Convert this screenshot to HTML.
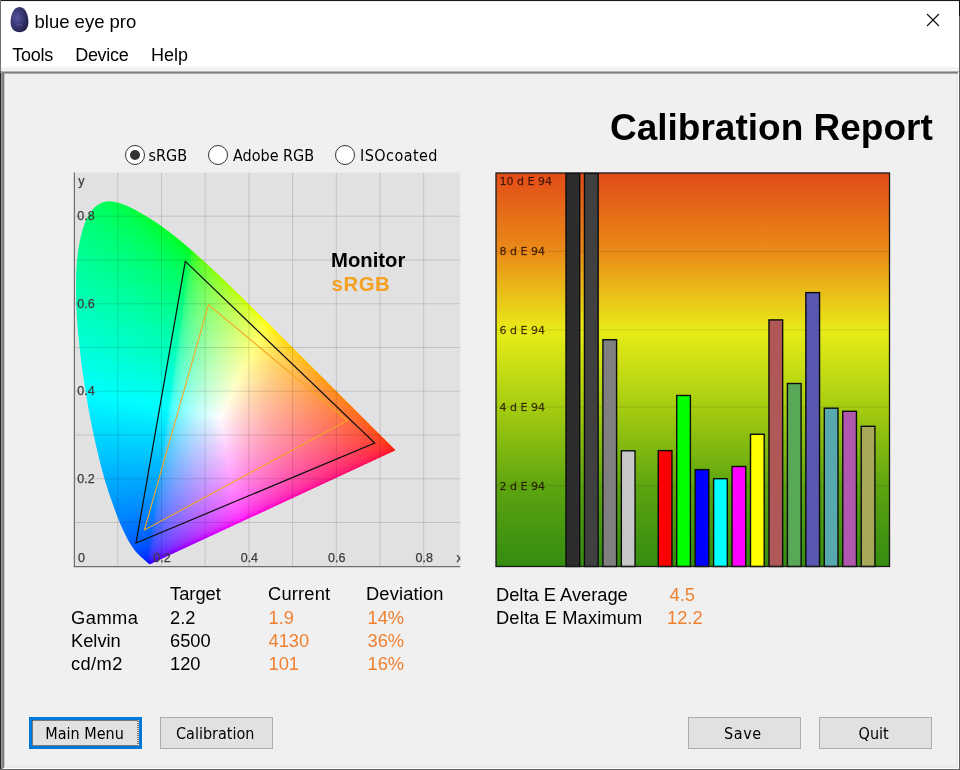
<!DOCTYPE html>
<html lang="en"><head><meta charset="utf-8"><title>blue eye pro</title>
<style>
html,body{margin:0;padding:0}
body{width:960px;height:770px;overflow:hidden;background:#f0f0f0;position:relative;font-family:"Liberation Sans",sans-serif}
.abs{position:absolute}
.btn{position:absolute;box-sizing:border-box;background:#e1e1e1;border:1px solid #adadad;width:112.5px;height:32px;top:717px}
.radio{position:absolute;box-sizing:border-box;width:20px;height:20px;border-radius:50%;border:1.6px solid #333;background:#fff;top:144.7px}
</style></head><body>
<div class="abs" style="left:0;top:0;width:960px;height:67px;background:#fff"></div>
<div class="abs" style="left:0;top:67px;width:960px;height:4px;background:#f2f2f2"></div>
<div class="abs" style="left:0;top:0;width:960px;height:1px;background:#1c1c1c"></div>
<div class="abs" style="left:0;top:1px;width:960px;height:1px;background:#ececec"></div>
<!-- content sunken edge -->
<div class="abs" style="left:1px;top:71px;width:958px;height:1px;background:#b6b6b6"></div>
<div class="abs" style="left:1px;top:72px;width:958px;height:1px;background:#7d7d7d"></div>
<div class="abs" style="left:3px;top:73px;width:955px;height:1px;background:#a9a9a9"></div>
<div class="abs" style="left:1px;top:71px;width:1px;height:698px;background:#9a9a9a"></div>
<div class="abs" style="left:2px;top:72px;width:1px;height:697px;background:#858585"></div>
<div class="abs" style="left:3px;top:72px;width:1px;height:696px;background:#7a7a7a"></div>
<div class="abs" style="left:4px;top:74px;width:1px;height:693px;background:#cbcbcb"></div>
<div class="abs" style="left:956px;top:74px;width:2px;height:692px;background:#e9e9e9"></div>
<div class="abs" style="left:5px;top:766px;width:953px;height:2px;background:#e9e9e9"></div>
<div class="abs" style="left:958px;top:72px;width:1px;height:697px;background:#fff"></div>
<div class="abs" style="left:3px;top:768px;width:956px;height:1px;background:#fff"></div>
<!-- outer frame -->
<div class="abs" style="left:0;top:0;width:1px;height:73px;background:#707070"></div>
<div class="abs" style="left:0;top:73px;width:1px;height:697px;background:#242424"></div>
<div class="abs" style="left:959px;top:0;width:1px;height:16px;background:#111"></div>
<div class="abs" style="left:959px;top:16px;width:1px;height:754px;background:#606060"></div>
<div class="abs" style="left:0;top:769px;width:960px;height:1px;background:#666"></div>
<!-- icon -->
<svg class="abs" style="left:0;top:0" width="60" height="40" viewBox="0 0 60 40">
<defs><radialGradient id="egg" cx="0.36" cy="0.42" r="0.62"><stop offset="0" stop-color="#5855a0"/><stop offset="0.45" stop-color="#3f3c7c"/><stop offset="1" stop-color="#25234c"/></radialGradient></defs>
<path d="M19.5 7 C25.8 7 28.4 15.8 28.4 22.2 C28.4 28.6 24.6 32.2 19.5 32.2 C14.4 32.2 10.6 28.6 10.6 22.2 C10.6 15.8 13.2 7 19.5 7Z" fill="url(#egg)"/>
<rect x="16.8" y="24.3" width="5.2" height="1.3" rx="0.6" fill="#7d7bb5" opacity="0.45"/>
</svg>
<svg class="abs" style="left:920px;top:8px" width="26" height="24" viewBox="920 8 26 24"><path d="M927 14L939 26M939 14L927 26" stroke="#111" stroke-width="1.15" fill="none"/></svg>
<!-- radios -->
<div class="radio" style="left:124.6px"></div><div class="abs" style="left:129.6px;top:149.7px;width:10px;height:10px;border-radius:50%;background:#333"></div>
<div class="radio" style="left:207.7px"></div>
<div class="radio" style="left:335.4px"></div>
<!-- charts -->
<svg class="abs" style="left:0;top:0;filter:blur(0.4px)" width="960" height="770" viewBox="0 0 960 770">

<rect x="74.4" y="172.5" width="385.8" height="393.8" fill="#e1e1e1"/>
<defs><linearGradient id="g0"><stop offset="0" stop-color="#00ff5c"/><stop offset="1" stop-color="#00ff47"/></linearGradient><linearGradient id="g1"><stop offset="0" stop-color="#00ff61"/><stop offset="1" stop-color="#00ff43"/></linearGradient><linearGradient id="g2"><stop offset="0" stop-color="#00ff65"/><stop offset="0.588" stop-color="#00ff52"/><stop offset="1" stop-color="#00ff3f"/></linearGradient><linearGradient id="g3"><stop offset="0" stop-color="#00ff69"/><stop offset="0.6" stop-color="#00ff52"/><stop offset="1" stop-color="#00ff3c"/></linearGradient><linearGradient id="g4"><stop offset="0" stop-color="#00ff6c"/><stop offset="0.591" stop-color="#00ff54"/><stop offset="1" stop-color="#00ff39"/></linearGradient><linearGradient id="g5"><stop offset="0" stop-color="#00ff6e"/><stop offset="0.6" stop-color="#00ff54"/><stop offset="1" stop-color="#00ff36"/></linearGradient><linearGradient id="g6"><stop offset="0" stop-color="#00ff71"/><stop offset="0.63" stop-color="#00ff53"/><stop offset="1" stop-color="#00ff33"/></linearGradient><linearGradient id="g7"><stop offset="0" stop-color="#00ff73"/><stop offset="0.621" stop-color="#00ff54"/><stop offset="0.828" stop-color="#00ff44"/><stop offset="1" stop-color="#00ff30"/></linearGradient><linearGradient id="g8"><stop offset="0" stop-color="#00ff75"/><stop offset="0.625" stop-color="#00ff55"/><stop offset="0.844" stop-color="#00ff42"/><stop offset="1" stop-color="#00ff2d"/></linearGradient><linearGradient id="g9"><stop offset="0" stop-color="#00ff78"/><stop offset="0.636" stop-color="#00ff55"/><stop offset="0.848" stop-color="#00ff41"/><stop offset="1" stop-color="#00ff2b"/></linearGradient><linearGradient id="g10"><stop offset="0" stop-color="#00ff7a"/><stop offset="0.371" stop-color="#00ff67"/><stop offset="0.657" stop-color="#00ff54"/><stop offset="0.857" stop-color="#00ff40"/><stop offset="1" stop-color="#00ff28"/></linearGradient><linearGradient id="g11"><stop offset="0" stop-color="#00ff7c"/><stop offset="0.378" stop-color="#00ff68"/><stop offset="0.676" stop-color="#00ff53"/><stop offset="0.865" stop-color="#00ff3e"/><stop offset="1" stop-color="#00ff25"/></linearGradient><linearGradient id="g12"><stop offset="0" stop-color="#00ff7e"/><stop offset="0.385" stop-color="#00ff69"/><stop offset="0.667" stop-color="#00ff54"/><stop offset="0.872" stop-color="#00ff3d"/><stop offset="1" stop-color="#00ff22"/></linearGradient><linearGradient id="g13"><stop offset="0" stop-color="#00ff80"/><stop offset="0.39" stop-color="#00ff6a"/><stop offset="0.683" stop-color="#00ff54"/><stop offset="0.878" stop-color="#00ff3c"/><stop offset="0.951" stop-color="#00ff2e"/><stop offset="1" stop-color="#00ff1e"/></linearGradient><linearGradient id="g14"><stop offset="0" stop-color="#00ff81"/><stop offset="0.405" stop-color="#00ff6b"/><stop offset="0.69" stop-color="#00ff54"/><stop offset="0.905" stop-color="#00ff37"/><stop offset="0.952" stop-color="#00ff2c"/><stop offset="1" stop-color="#00ff1b"/></linearGradient><linearGradient id="g15"><stop offset="0" stop-color="#00ff83"/><stop offset="0.409" stop-color="#00ff6c"/><stop offset="0.705" stop-color="#00ff53"/><stop offset="0.909" stop-color="#00ff35"/><stop offset="0.955" stop-color="#00ff2a"/><stop offset="1" stop-color="#00ff17"/></linearGradient><linearGradient id="g16"><stop offset="0" stop-color="#00ff85"/><stop offset="0.4" stop-color="#00ff6e"/><stop offset="0.711" stop-color="#00ff53"/><stop offset="0.911" stop-color="#00ff34"/><stop offset="0.978" stop-color="#00ff20"/><stop offset="1" stop-color="#00ff12"/></linearGradient><linearGradient id="g17"><stop offset="0" stop-color="#00ff87"/><stop offset="0.426" stop-color="#00ff6d"/><stop offset="0.745" stop-color="#00ff50"/><stop offset="0.851" stop-color="#00ff40"/><stop offset="0.936" stop-color="#00ff2e"/><stop offset="0.979" stop-color="#00ff1e"/><stop offset="1" stop-color="#00ff0b"/></linearGradient><linearGradient id="g18"><stop offset="0" stop-color="#00ff89"/><stop offset="0.458" stop-color="#00ff6c"/><stop offset="0.771" stop-color="#00ff4d"/><stop offset="0.875" stop-color="#00ff3c"/><stop offset="0.938" stop-color="#00ff2d"/><stop offset="0.979" stop-color="#00ff1b"/><stop offset="1" stop-color="#00ff00"/></linearGradient><linearGradient id="g19"><stop offset="0" stop-color="#00ff8a"/><stop offset="0.44" stop-color="#00ff6f"/><stop offset="0.76" stop-color="#00ff4f"/><stop offset="0.86" stop-color="#00ff3f"/><stop offset="0.94" stop-color="#00ff2b"/><stop offset="0.98" stop-color="#00ff19"/><stop offset="1" stop-color="#00ff00"/></linearGradient><linearGradient id="g20"><stop offset="0" stop-color="#00ff8c"/><stop offset="0.451" stop-color="#00ff6f"/><stop offset="0.765" stop-color="#00ff4f"/><stop offset="0.863" stop-color="#00ff3f"/><stop offset="0.941" stop-color="#00ff2a"/><stop offset="0.98" stop-color="#00ff16"/><stop offset="1" stop-color="#00ff00"/></linearGradient><linearGradient id="g21"><stop offset="0" stop-color="#00ff8e"/><stop offset="0.453" stop-color="#00ff71"/><stop offset="0.755" stop-color="#00ff51"/><stop offset="0.849" stop-color="#00ff42"/><stop offset="0.925" stop-color="#00ff30"/><stop offset="0.962" stop-color="#00ff21"/><stop offset="1" stop-color="#00ff00"/></linearGradient><linearGradient id="g22"><stop offset="0" stop-color="#00ff8f"/><stop offset="0.444" stop-color="#00ff73"/><stop offset="0.759" stop-color="#00ff51"/><stop offset="0.852" stop-color="#00ff42"/><stop offset="0.926" stop-color="#00ff2f"/><stop offset="0.963" stop-color="#00ff1f"/><stop offset="1" stop-color="#00ff00"/></linearGradient><linearGradient id="g23"><stop offset="0" stop-color="#00ff91"/><stop offset="0.436" stop-color="#00ff74"/><stop offset="0.745" stop-color="#00ff54"/><stop offset="0.855" stop-color="#00ff42"/><stop offset="0.927" stop-color="#00ff2e"/><stop offset="0.964" stop-color="#00ff1e"/><stop offset="0.982" stop-color="#00ff09"/><stop offset="1" stop-color="#16ff00"/></linearGradient><linearGradient id="g24"><stop offset="0" stop-color="#00ff92"/><stop offset="0.386" stop-color="#00ff7a"/><stop offset="0.684" stop-color="#00ff5d"/><stop offset="0.877" stop-color="#00ff3d"/><stop offset="0.93" stop-color="#00ff2e"/><stop offset="0.965" stop-color="#00ff1c"/><stop offset="0.982" stop-color="#20ff00"/><stop offset="1" stop-color="#34ff00"/></linearGradient><linearGradient id="g25"><stop offset="0" stop-color="#00ff94"/><stop offset="0.379" stop-color="#00ff7c"/><stop offset="0.655" stop-color="#00ff62"/><stop offset="0.845" stop-color="#00ff45"/><stop offset="0.914" stop-color="#00ff33"/><stop offset="0.948" stop-color="#00ff26"/><stop offset="0.966" stop-color="#26ff1b"/><stop offset="0.983" stop-color="#37ff00"/><stop offset="1" stop-color="#43ff00"/></linearGradient><linearGradient id="g26"><stop offset="0" stop-color="#00ff95"/><stop offset="0.356" stop-color="#00ff7f"/><stop offset="0.627" stop-color="#00ff66"/><stop offset="0.814" stop-color="#00ff4b"/><stop offset="0.932" stop-color="#00ff2d"/><stop offset="0.949" stop-color="#2bff25"/><stop offset="0.966" stop-color="#3bff1a"/><stop offset="0.983" stop-color="#46ff00"/><stop offset="1" stop-color="#4fff00"/></linearGradient><linearGradient id="g27"><stop offset="0" stop-color="#00ff97"/><stop offset="0.333" stop-color="#00ff82"/><stop offset="0.583" stop-color="#00ff6c"/><stop offset="0.767" stop-color="#00ff54"/><stop offset="0.9" stop-color="#00ff38"/><stop offset="0.917" stop-color="#12ff33"/><stop offset="0.933" stop-color="#2fff2c"/><stop offset="0.967" stop-color="#48ff18"/><stop offset="0.983" stop-color="#51ff00"/><stop offset="1" stop-color="#59ff00"/></linearGradient><linearGradient id="g28"><stop offset="0" stop-color="#00ff98"/><stop offset="0.306" stop-color="#00ff85"/><stop offset="0.565" stop-color="#00ff6f"/><stop offset="0.758" stop-color="#00ff56"/><stop offset="0.887" stop-color="#00ff3c"/><stop offset="0.903" stop-color="#1fff37"/><stop offset="0.919" stop-color="#34ff32"/><stop offset="0.952" stop-color="#4bff23"/><stop offset="0.968" stop-color="#53ff16"/><stop offset="0.984" stop-color="#5bff00"/><stop offset="1" stop-color="#62ff00"/></linearGradient><linearGradient id="g29"><stop offset="0" stop-color="#00ff9a"/><stop offset="0.302" stop-color="#00ff87"/><stop offset="0.556" stop-color="#00ff71"/><stop offset="0.746" stop-color="#00ff59"/><stop offset="0.873" stop-color="#00ff40"/><stop offset="0.889" stop-color="#24ff3c"/><stop offset="0.905" stop-color="#37ff37"/><stop offset="0.952" stop-color="#55ff23"/><stop offset="0.968" stop-color="#5dff15"/><stop offset="0.984" stop-color="#63ff00"/><stop offset="1" stop-color="#6aff00"/></linearGradient><linearGradient id="g30"><stop offset="0" stop-color="#00ff9b"/><stop offset="0.531" stop-color="#00ff75"/><stop offset="0.719" stop-color="#00ff5e"/><stop offset="0.859" stop-color="#00ff44"/><stop offset="0.875" stop-color="#29ff40"/><stop offset="0.891" stop-color="#3aff3c"/><stop offset="0.953" stop-color="#5eff22"/><stop offset="0.984" stop-color="#6bff00"/><stop offset="1" stop-color="#71ff00"/></linearGradient><linearGradient id="g31"><stop offset="0" stop-color="#00ff9d"/><stop offset="0.523" stop-color="#00ff77"/><stop offset="0.708" stop-color="#00ff61"/><stop offset="0.846" stop-color="#00ff48"/><stop offset="0.862" stop-color="#2dff44"/><stop offset="0.877" stop-color="#3cff41"/><stop offset="0.938" stop-color="#60ff2b"/><stop offset="0.954" stop-color="#66ff22"/><stop offset="0.985" stop-color="#72ff00"/><stop offset="1" stop-color="#77ff00"/></linearGradient><linearGradient id="g32"><stop offset="0" stop-color="#00ff9e"/><stop offset="0.5" stop-color="#00ff7a"/><stop offset="0.682" stop-color="#00ff65"/><stop offset="0.818" stop-color="#00ff4f"/><stop offset="0.833" stop-color="#14ff4c"/><stop offset="0.848" stop-color="#30ff48"/><stop offset="0.879" stop-color="#49ff41"/><stop offset="0.939" stop-color="#68ff2a"/><stop offset="0.955" stop-color="#6eff21"/><stop offset="0.985" stop-color="#79ff00"/><stop offset="1" stop-color="#7eff00"/></linearGradient><linearGradient id="g33"><stop offset="0" stop-color="#00ffa0"/><stop offset="0.493" stop-color="#00ff7c"/><stop offset="0.672" stop-color="#00ff68"/><stop offset="0.806" stop-color="#00ff52"/><stop offset="0.836" stop-color="#33ff4c"/><stop offset="0.866" stop-color="#4bff45"/><stop offset="0.94" stop-color="#6fff2a"/><stop offset="0.955" stop-color="#75ff21"/><stop offset="0.985" stop-color="#7fff00"/><stop offset="1" stop-color="#84ff00"/></linearGradient><linearGradient id="g34"><stop offset="0" stop-color="#00ffa1"/><stop offset="0.485" stop-color="#00ff7e"/><stop offset="0.662" stop-color="#00ff6a"/><stop offset="0.794" stop-color="#00ff55"/><stop offset="0.809" stop-color="#21ff53"/><stop offset="0.824" stop-color="#35ff4f"/><stop offset="0.853" stop-color="#4dff49"/><stop offset="0.941" stop-color="#76ff2a"/><stop offset="0.956" stop-color="#7bff21"/><stop offset="0.985" stop-color="#85ff00"/><stop offset="1" stop-color="#8aff00"/></linearGradient><linearGradient id="g35"><stop offset="0" stop-color="#00ffa3"/><stop offset="0.471" stop-color="#00ff81"/><stop offset="0.643" stop-color="#00ff6e"/><stop offset="0.786" stop-color="#00ff58"/><stop offset="0.8" stop-color="#2aff55"/><stop offset="0.814" stop-color="#3bff52"/><stop offset="0.843" stop-color="#50ff4c"/><stop offset="0.929" stop-color="#78ff31"/><stop offset="0.957" stop-color="#82ff20"/><stop offset="0.971" stop-color="#86ff0b"/><stop offset="0.986" stop-color="#8bff00"/><stop offset="1" stop-color="#8fff00"/></linearGradient><linearGradient id="g36"><stop offset="0" stop-color="#00ffa4"/><stop offset="0.465" stop-color="#00ff83"/><stop offset="0.634" stop-color="#00ff70"/><stop offset="0.775" stop-color="#00ff5b"/><stop offset="0.789" stop-color="#2dff58"/><stop offset="0.803" stop-color="#3dff55"/><stop offset="0.831" stop-color="#52ff4f"/><stop offset="0.873" stop-color="#68ff45"/><stop offset="0.93" stop-color="#7eff31"/><stop offset="0.958" stop-color="#87ff1f"/><stop offset="0.972" stop-color="#8cff09"/><stop offset="0.986" stop-color="#90ff00"/><stop offset="1" stop-color="#94ff00"/></linearGradient><linearGradient id="g37"><stop offset="0" stop-color="#00ffa6"/><stop offset="0.444" stop-color="#00ff86"/><stop offset="0.75" stop-color="#00ff60"/><stop offset="0.764" stop-color="#14ff5e"/><stop offset="0.778" stop-color="#30ff5b"/><stop offset="0.792" stop-color="#3fff59"/><stop offset="0.819" stop-color="#53ff53"/><stop offset="0.861" stop-color="#69ff49"/><stop offset="0.931" stop-color="#84ff31"/><stop offset="0.958" stop-color="#8dff1f"/><stop offset="0.972" stop-color="#91ff06"/><stop offset="1" stop-color="#9aff00"/></linearGradient><linearGradient id="g38"><stop offset="0" stop-color="#00ffa7"/><stop offset="0.438" stop-color="#00ff88"/><stop offset="0.74" stop-color="#00ff63"/><stop offset="0.767" stop-color="#33ff5e"/><stop offset="0.808" stop-color="#55ff56"/><stop offset="0.849" stop-color="#6aff4d"/><stop offset="0.918" stop-color="#85ff37"/><stop offset="0.959" stop-color="#93ff1f"/><stop offset="0.973" stop-color="#97ff00"/><stop offset="1" stop-color="#9fff00"/></linearGradient><linearGradient id="g39"><stop offset="0" stop-color="#00ffa9"/><stop offset="0.432" stop-color="#00ff89"/><stop offset="0.73" stop-color="#00ff66"/><stop offset="0.743" stop-color="#21ff63"/><stop offset="0.757" stop-color="#36ff61"/><stop offset="0.797" stop-color="#56ff59"/><stop offset="0.851" stop-color="#72ff4d"/><stop offset="0.919" stop-color="#8bff37"/><stop offset="0.959" stop-color="#98ff1f"/><stop offset="0.973" stop-color="#9cff00"/><stop offset="1" stop-color="#a4ff00"/></linearGradient><linearGradient id="g40"><stop offset="0" stop-color="#00ffaa"/><stop offset="0.427" stop-color="#00ff8b"/><stop offset="0.72" stop-color="#00ff68"/><stop offset="0.733" stop-color="#25ff66"/><stop offset="0.747" stop-color="#38ff64"/><stop offset="0.787" stop-color="#58ff5c"/><stop offset="0.84" stop-color="#73ff51"/><stop offset="0.92" stop-color="#90ff37"/><stop offset="0.96" stop-color="#9dff1f"/><stop offset="0.973" stop-color="#a1ff00"/><stop offset="1" stop-color="#a8ff00"/></linearGradient><linearGradient id="g41"><stop offset="0" stop-color="#00ffab"/><stop offset="0.408" stop-color="#00ff8e"/><stop offset="0.711" stop-color="#00ff6b"/><stop offset="0.724" stop-color="#29ff69"/><stop offset="0.75" stop-color="#47ff64"/><stop offset="0.776" stop-color="#59ff5f"/><stop offset="0.842" stop-color="#7aff51"/><stop offset="0.921" stop-color="#96ff38"/><stop offset="0.961" stop-color="#a2ff1f"/><stop offset="0.974" stop-color="#a6ff00"/><stop offset="1" stop-color="#adff00"/></linearGradient><linearGradient id="g42"><stop offset="0" stop-color="#00ffad"/><stop offset="0.403" stop-color="#00ff90"/><stop offset="0.701" stop-color="#00ff6d"/><stop offset="0.714" stop-color="#2cff6b"/><stop offset="0.74" stop-color="#49ff67"/><stop offset="0.766" stop-color="#5bff62"/><stop offset="0.831" stop-color="#7bff55"/><stop offset="0.922" stop-color="#9bff38"/><stop offset="0.961" stop-color="#a7ff1f"/><stop offset="0.974" stop-color="#abff00"/><stop offset="1" stop-color="#b2ff00"/></linearGradient><linearGradient id="g43"><stop offset="0" stop-color="#00ffae"/><stop offset="0.397" stop-color="#00ff92"/><stop offset="0.679" stop-color="#00ff72"/><stop offset="0.692" stop-color="#08ff70"/><stop offset="0.705" stop-color="#2fff6e"/><stop offset="0.718" stop-color="#3fff6c"/><stop offset="0.769" stop-color="#64ff63"/><stop offset="0.833" stop-color="#81ff55"/><stop offset="0.91" stop-color="#9cff3d"/><stop offset="0.936" stop-color="#a4ff32"/><stop offset="0.962" stop-color="#acff1f"/><stop offset="0.974" stop-color="#afff00"/><stop offset="1" stop-color="#b6ff00"/></linearGradient><linearGradient id="g44"><stop offset="0" stop-color="#00ffb0"/><stop offset="0.38" stop-color="#00ff95"/><stop offset="0.671" stop-color="#00ff74"/><stop offset="0.684" stop-color="#16ff72"/><stop offset="0.696" stop-color="#32ff70"/><stop offset="0.709" stop-color="#41ff6e"/><stop offset="0.759" stop-color="#65ff66"/><stop offset="0.823" stop-color="#82ff58"/><stop offset="0.911" stop-color="#a1ff3e"/><stop offset="0.937" stop-color="#a9ff32"/><stop offset="0.962" stop-color="#b0ff1f"/><stop offset="0.975" stop-color="#b4ff00"/><stop offset="1" stop-color="#bbff00"/></linearGradient><linearGradient id="g45"><stop offset="0" stop-color="#00ffb1"/><stop offset="0.375" stop-color="#00ff97"/><stop offset="0.662" stop-color="#00ff76"/><stop offset="0.687" stop-color="#35ff73"/><stop offset="0.712" stop-color="#4eff6f"/><stop offset="0.75" stop-color="#66ff68"/><stop offset="0.825" stop-color="#88ff59"/><stop offset="0.912" stop-color="#a6ff3e"/><stop offset="0.937" stop-color="#aeff32"/><stop offset="0.963" stop-color="#b5ff1f"/><stop offset="0.975" stop-color="#b9ff00"/><stop offset="1" stop-color="#bfff00"/></linearGradient><linearGradient id="g46"><stop offset="0" stop-color="#00ffb3"/><stop offset="0.37" stop-color="#00ff98"/><stop offset="0.654" stop-color="#00ff79"/><stop offset="0.667" stop-color="#22ff77"/><stop offset="0.679" stop-color="#37ff75"/><stop offset="0.704" stop-color="#4fff71"/><stop offset="0.741" stop-color="#68ff6b"/><stop offset="0.815" stop-color="#89ff5c"/><stop offset="0.914" stop-color="#abff3e"/><stop offset="0.938" stop-color="#b3ff32"/><stop offset="0.963" stop-color="#baff1f"/><stop offset="0.975" stop-color="#bdff00"/><stop offset="1" stop-color="#c4ff00"/></linearGradient><linearGradient id="g47"><stop offset="0" stop-color="#00ffb4"/><stop offset="0.366" stop-color="#00ff9a"/><stop offset="0.646" stop-color="#00ff7b"/><stop offset="0.659" stop-color="#26ff79"/><stop offset="0.671" stop-color="#3aff78"/><stop offset="0.695" stop-color="#51ff74"/><stop offset="0.732" stop-color="#69ff6e"/><stop offset="0.805" stop-color="#8bff5f"/><stop offset="0.915" stop-color="#b0ff3f"/><stop offset="0.939" stop-color="#b7ff32"/><stop offset="0.963" stop-color="#beff1f"/><stop offset="0.976" stop-color="#c2ff00"/><stop offset="1" stop-color="#c8ff00"/></linearGradient><linearGradient id="g48"><stop offset="0" stop-color="#00ffb5"/><stop offset="0.361" stop-color="#00ff9c"/><stop offset="0.639" stop-color="#00ff7d"/><stop offset="0.651" stop-color="#2aff7c"/><stop offset="0.663" stop-color="#3cff7a"/><stop offset="0.687" stop-color="#53ff76"/><stop offset="0.723" stop-color="#6aff70"/><stop offset="0.795" stop-color="#8cff63"/><stop offset="0.904" stop-color="#b1ff44"/><stop offset="0.952" stop-color="#bfff2a"/><stop offset="0.964" stop-color="#c3ff1f"/><stop offset="0.976" stop-color="#c6ff00"/><stop offset="1" stop-color="#cdff00"/></linearGradient><linearGradient id="g49"><stop offset="0" stop-color="#00ffb7"/><stop offset="0.357" stop-color="#00ff9e"/><stop offset="0.631" stop-color="#00ff80"/><stop offset="0.643" stop-color="#2dff7e"/><stop offset="0.655" stop-color="#3eff7c"/><stop offset="0.679" stop-color="#54ff79"/><stop offset="0.714" stop-color="#6bff73"/><stop offset="0.798" stop-color="#92ff63"/><stop offset="0.905" stop-color="#b6ff44"/><stop offset="0.952" stop-color="#c4ff2b"/><stop offset="0.964" stop-color="#c7ff1f"/><stop offset="0.976" stop-color="#cbff00"/><stop offset="1" stop-color="#d1ff00"/></linearGradient><linearGradient id="g50"><stop offset="0" stop-color="#00ffb8"/><stop offset="0.341" stop-color="#00ffa0"/><stop offset="0.612" stop-color="#00ff84"/><stop offset="0.624" stop-color="#0aff82"/><stop offset="0.635" stop-color="#30ff80"/><stop offset="0.647" stop-color="#40ff7f"/><stop offset="0.671" stop-color="#56ff7b"/><stop offset="0.706" stop-color="#6dff76"/><stop offset="0.788" stop-color="#93ff66"/><stop offset="0.906" stop-color="#bbff45"/><stop offset="0.953" stop-color="#c9ff2b"/><stop offset="0.965" stop-color="#ccff1f"/><stop offset="0.976" stop-color="#cfff00"/><stop offset="1" stop-color="#d5ff00"/></linearGradient><linearGradient id="g51"><stop offset="0" stop-color="#00ffba"/><stop offset="0.337" stop-color="#00ffa2"/><stop offset="0.605" stop-color="#00ff86"/><stop offset="0.628" stop-color="#33ff83"/><stop offset="0.64" stop-color="#42ff81"/><stop offset="0.663" stop-color="#57ff7e"/><stop offset="0.698" stop-color="#6eff78"/><stop offset="0.779" stop-color="#94ff69"/><stop offset="0.849" stop-color="#adff58"/><stop offset="0.907" stop-color="#bfff45"/><stop offset="0.953" stop-color="#cdff2b"/><stop offset="0.965" stop-color="#d0ff1f"/><stop offset="0.977" stop-color="#d4ff00"/><stop offset="1" stop-color="#daff00"/></linearGradient><linearGradient id="g52"><stop offset="0" stop-color="#00ffbb"/><stop offset="0.333" stop-color="#00ffa4"/><stop offset="0.598" stop-color="#00ff88"/><stop offset="0.621" stop-color="#36ff85"/><stop offset="0.632" stop-color="#44ff83"/><stop offset="0.655" stop-color="#59ff80"/><stop offset="0.69" stop-color="#6fff7b"/><stop offset="0.77" stop-color="#95ff6c"/><stop offset="0.897" stop-color="#c1ff4a"/><stop offset="0.954" stop-color="#d1ff2b"/><stop offset="0.966" stop-color="#d5ff20"/><stop offset="0.977" stop-color="#d8ff00"/><stop offset="1" stop-color="#deff00"/></linearGradient><linearGradient id="g53"><stop offset="0" stop-color="#00ffbd"/><stop offset="0.33" stop-color="#00ffa5"/><stop offset="0.591" stop-color="#00ff8a"/><stop offset="0.602" stop-color="#23ff89"/><stop offset="0.614" stop-color="#39ff87"/><stop offset="0.636" stop-color="#51ff84"/><stop offset="0.682" stop-color="#71ff7d"/><stop offset="0.773" stop-color="#9bff6d"/><stop offset="0.898" stop-color="#c5ff4a"/><stop offset="0.955" stop-color="#d6ff2c"/><stop offset="0.966" stop-color="#d9ff20"/><stop offset="0.977" stop-color="#dcff00"/><stop offset="1" stop-color="#e3ff00"/></linearGradient><linearGradient id="g54"><stop offset="0" stop-color="#00ffbe"/><stop offset="0.326" stop-color="#00ffa7"/><stop offset="0.584" stop-color="#00ff8c"/><stop offset="0.596" stop-color="#28ff8b"/><stop offset="0.607" stop-color="#3bff89"/><stop offset="0.629" stop-color="#53ff86"/><stop offset="0.674" stop-color="#72ff7f"/><stop offset="0.764" stop-color="#9cff70"/><stop offset="0.899" stop-color="#caff4b"/><stop offset="0.955" stop-color="#daff2c"/><stop offset="0.966" stop-color="#deff20"/><stop offset="0.978" stop-color="#e1ff00"/><stop offset="1" stop-color="#e7ff00"/></linearGradient><linearGradient id="g55"><stop offset="0" stop-color="#00ffc0"/><stop offset="0.322" stop-color="#00ffa9"/><stop offset="0.578" stop-color="#00ff8e"/><stop offset="0.589" stop-color="#2cff8d"/><stop offset="0.6" stop-color="#3eff8b"/><stop offset="0.622" stop-color="#55ff88"/><stop offset="0.667" stop-color="#73ff82"/><stop offset="0.767" stop-color="#a1ff70"/><stop offset="0.9" stop-color="#cfff4b"/><stop offset="0.956" stop-color="#dfff2c"/><stop offset="0.967" stop-color="#e2ff20"/><stop offset="0.978" stop-color="#e5ff00"/><stop offset="1" stop-color="#ebff00"/></linearGradient><linearGradient id="g56"><stop offset="0" stop-color="#00ffc1"/><stop offset="0.319" stop-color="#00ffab"/><stop offset="0.571" stop-color="#00ff91"/><stop offset="0.582" stop-color="#2fff8f"/><stop offset="0.593" stop-color="#40ff8e"/><stop offset="0.615" stop-color="#57ff8b"/><stop offset="0.659" stop-color="#75ff84"/><stop offset="0.758" stop-color="#a3ff73"/><stop offset="0.835" stop-color="#beff61"/><stop offset="0.901" stop-color="#d3ff4c"/><stop offset="0.956" stop-color="#e3ff2d"/><stop offset="0.967" stop-color="#e6ff21"/><stop offset="0.978" stop-color="#e9ff00"/><stop offset="1" stop-color="#f0ff00"/></linearGradient><linearGradient id="g57"><stop offset="0" stop-color="#00ffc2"/><stop offset="0.304" stop-color="#00ffad"/><stop offset="0.554" stop-color="#00ff94"/><stop offset="0.565" stop-color="#12ff93"/><stop offset="0.576" stop-color="#33ff91"/><stop offset="0.587" stop-color="#42ff90"/><stop offset="0.62" stop-color="#61ff8b"/><stop offset="0.663" stop-color="#7cff85"/><stop offset="0.728" stop-color="#9bff7a"/><stop offset="0.804" stop-color="#b8ff6a"/><stop offset="0.902" stop-color="#d8ff4c"/><stop offset="0.957" stop-color="#e8ff2d"/><stop offset="0.967" stop-color="#ebff21"/><stop offset="0.978" stop-color="#eeff00"/><stop offset="1" stop-color="#f4ff00"/></linearGradient><linearGradient id="g58"><stop offset="0" stop-color="#00ffc4"/><stop offset="0.301" stop-color="#00ffaf"/><stop offset="0.548" stop-color="#00ff96"/><stop offset="0.57" stop-color="#36ff93"/><stop offset="0.581" stop-color="#45ff92"/><stop offset="0.613" stop-color="#62ff8e"/><stop offset="0.656" stop-color="#7eff87"/><stop offset="0.753" stop-color="#a9ff76"/><stop offset="0.892" stop-color="#d9ff51"/><stop offset="0.935" stop-color="#e6ff3d"/><stop offset="0.957" stop-color="#ecff2d"/><stop offset="0.968" stop-color="#efff21"/><stop offset="0.978" stop-color="#f2ff00"/><stop offset="1" stop-color="#f8ff00"/></linearGradient><linearGradient id="g59"><stop offset="0" stop-color="#00ffc5"/><stop offset="0.298" stop-color="#00ffb1"/><stop offset="0.543" stop-color="#00ff98"/><stop offset="0.553" stop-color="#22ff97"/><stop offset="0.564" stop-color="#39ff96"/><stop offset="0.574" stop-color="#47ff94"/><stop offset="0.606" stop-color="#64ff90"/><stop offset="0.649" stop-color="#7fff8a"/><stop offset="0.755" stop-color="#afff77"/><stop offset="0.83" stop-color="#c9ff66"/><stop offset="0.894" stop-color="#deff51"/><stop offset="0.936" stop-color="#eaff3d"/><stop offset="0.957" stop-color="#f1ff2e"/><stop offset="0.968" stop-color="#f4ff22"/><stop offset="0.979" stop-color="#f7ff00"/><stop offset="1" stop-color="#fdff00"/></linearGradient><linearGradient id="g60"><stop offset="0" stop-color="#00ffc7"/><stop offset="0.295" stop-color="#00ffb2"/><stop offset="0.537" stop-color="#00ff9a"/><stop offset="0.547" stop-color="#27ff99"/><stop offset="0.558" stop-color="#3cff98"/><stop offset="0.568" stop-color="#49ff96"/><stop offset="0.6" stop-color="#66ff92"/><stop offset="0.642" stop-color="#80ff8c"/><stop offset="0.747" stop-color="#b0ff7a"/><stop offset="0.832" stop-color="#ceff66"/><stop offset="0.895" stop-color="#e2ff52"/><stop offset="0.937" stop-color="#efff3e"/><stop offset="0.958" stop-color="#f5ff2e"/><stop offset="0.968" stop-color="#f8ff22"/><stop offset="0.979" stop-color="#fbff00"/><stop offset="1" stop-color="#fffd00"/></linearGradient><linearGradient id="g61"><stop offset="0" stop-color="#00ffc8"/><stop offset="0.292" stop-color="#00ffb4"/><stop offset="0.531" stop-color="#00ff9c"/><stop offset="0.542" stop-color="#2bff9b"/><stop offset="0.562" stop-color="#4bff98"/><stop offset="0.594" stop-color="#67ff94"/><stop offset="0.635" stop-color="#82ff8e"/><stop offset="0.708" stop-color="#a5ff83"/><stop offset="0.792" stop-color="#c5ff72"/><stop offset="0.896" stop-color="#e7ff52"/><stop offset="0.938" stop-color="#f3ff3e"/><stop offset="0.958" stop-color="#faff2e"/><stop offset="0.969" stop-color="#fdff22"/><stop offset="0.979" stop-color="#fffe00"/><stop offset="1" stop-color="#fff800"/></linearGradient><linearGradient id="g62"><stop offset="0" stop-color="#00ffca"/><stop offset="0.289" stop-color="#00ffb6"/><stop offset="0.526" stop-color="#00ff9e"/><stop offset="0.536" stop-color="#30ff9d"/><stop offset="0.557" stop-color="#4eff9b"/><stop offset="0.588" stop-color="#69ff97"/><stop offset="0.639" stop-color="#89ff8f"/><stop offset="0.711" stop-color="#aaff83"/><stop offset="0.794" stop-color="#c9ff72"/><stop offset="0.897" stop-color="#ebff53"/><stop offset="0.938" stop-color="#f8ff3f"/><stop offset="0.959" stop-color="#feff2f"/><stop offset="0.969" stop-color="#fffd22"/><stop offset="0.979" stop-color="#fffa00"/><stop offset="1" stop-color="#fff400"/></linearGradient><linearGradient id="g63"><stop offset="0" stop-color="#00ffcb"/><stop offset="0.286" stop-color="#00ffb8"/><stop offset="0.51" stop-color="#00ffa2"/><stop offset="0.52" stop-color="#11ffa0"/><stop offset="0.531" stop-color="#33ff9f"/><stop offset="0.551" stop-color="#50ff9d"/><stop offset="0.592" stop-color="#72ff97"/><stop offset="0.643" stop-color="#8fff90"/><stop offset="0.796" stop-color="#ceff73"/><stop offset="0.898" stop-color="#f0ff54"/><stop offset="0.939" stop-color="#fdff3f"/><stop offset="0.959" stop-color="#fffb2f"/><stop offset="0.969" stop-color="#fff822"/><stop offset="0.98" stop-color="#fff600"/><stop offset="1" stop-color="#fff000"/></linearGradient><linearGradient id="g64"><stop offset="0" stop-color="#00ffcd"/><stop offset="0.273" stop-color="#00ffba"/><stop offset="0.505" stop-color="#00ffa4"/><stop offset="0.525" stop-color="#37ffa1"/><stop offset="0.545" stop-color="#52ff9f"/><stop offset="0.586" stop-color="#73ff9a"/><stop offset="0.636" stop-color="#91ff92"/><stop offset="0.788" stop-color="#d0ff76"/><stop offset="0.899" stop-color="#f5ff54"/><stop offset="0.929" stop-color="#feff46"/><stop offset="0.96" stop-color="#fff72e"/><stop offset="0.97" stop-color="#fff422"/><stop offset="0.98" stop-color="#fff100"/><stop offset="1" stop-color="#ffec00"/></linearGradient><linearGradient id="g65"><stop offset="0" stop-color="#00ffce"/><stop offset="0.283" stop-color="#00ffbb"/><stop offset="0.505" stop-color="#00ffa5"/><stop offset="0.515" stop-color="#31ffa4"/><stop offset="0.535" stop-color="#4fffa2"/><stop offset="0.576" stop-color="#72ff9c"/><stop offset="0.626" stop-color="#90ff95"/><stop offset="0.778" stop-color="#d0ff7a"/><stop offset="0.889" stop-color="#f6ff59"/><stop offset="0.919" stop-color="#ffff4c"/><stop offset="0.949" stop-color="#fff637"/><stop offset="0.97" stop-color="#fff022"/><stop offset="0.98" stop-color="#ffed04"/><stop offset="1" stop-color="#ffe800"/></linearGradient><linearGradient id="g66"><stop offset="0" stop-color="#00ffd0"/><stop offset="0.27" stop-color="#00ffbd"/><stop offset="0.49" stop-color="#00ffa8"/><stop offset="0.5" stop-color="#13ffa7"/><stop offset="0.51" stop-color="#34ffa6"/><stop offset="0.53" stop-color="#51ffa4"/><stop offset="0.57" stop-color="#73ff9f"/><stop offset="0.63" stop-color="#97ff96"/><stop offset="0.78" stop-color="#d5ff7b"/><stop offset="0.89" stop-color="#fbff5a"/><stop offset="0.95" stop-color="#fff137"/><stop offset="0.97" stop-color="#ffec22"/><stop offset="0.98" stop-color="#ffe907"/><stop offset="0.99" stop-color="#ffe700"/><stop offset="1" stop-color="#ffe400"/></linearGradient><linearGradient id="g67"><stop offset="0" stop-color="#00ffd1"/><stop offset="0.267" stop-color="#00ffbf"/><stop offset="0.485" stop-color="#00ffaa"/><stop offset="0.505" stop-color="#38ffa8"/><stop offset="0.525" stop-color="#53ffa6"/><stop offset="0.564" stop-color="#75ffa1"/><stop offset="0.634" stop-color="#9dff97"/><stop offset="0.782" stop-color="#daff7b"/><stop offset="0.891" stop-color="#ffff5a"/><stop offset="0.95" stop-color="#ffed36"/><stop offset="0.97" stop-color="#ffe822"/><stop offset="0.98" stop-color="#ffe608"/><stop offset="0.99" stop-color="#ffe300"/><stop offset="1" stop-color="#ffe100"/></linearGradient><linearGradient id="g68"><stop offset="0" stop-color="#00ffd3"/><stop offset="0.265" stop-color="#00ffc1"/><stop offset="0.48" stop-color="#00ffac"/><stop offset="0.49" stop-color="#24ffab"/><stop offset="0.5" stop-color="#3bffaa"/><stop offset="0.52" stop-color="#55ffa8"/><stop offset="0.559" stop-color="#77ffa3"/><stop offset="0.627" stop-color="#9fff99"/><stop offset="0.765" stop-color="#d8ff81"/><stop offset="0.873" stop-color="#feff63"/><stop offset="0.951" stop-color="#ffe936"/><stop offset="0.971" stop-color="#ffe422"/><stop offset="0.98" stop-color="#ffe20a"/><stop offset="0.99" stop-color="#ffdf00"/><stop offset="1" stop-color="#ffdd00"/></linearGradient><linearGradient id="g69"><stop offset="0" stop-color="#00ffd4"/><stop offset="0.262" stop-color="#00ffc3"/><stop offset="0.476" stop-color="#00ffaf"/><stop offset="0.485" stop-color="#2affad"/><stop offset="0.495" stop-color="#3effac"/><stop offset="0.515" stop-color="#58ffaa"/><stop offset="0.563" stop-color="#7fffa4"/><stop offset="0.631" stop-color="#a5ff9a"/><stop offset="0.767" stop-color="#ddff81"/><stop offset="0.864" stop-color="#ffff67"/><stop offset="0.951" stop-color="#ffe535"/><stop offset="0.971" stop-color="#ffe022"/><stop offset="0.981" stop-color="#ffde0b"/><stop offset="0.99" stop-color="#ffdc00"/><stop offset="1" stop-color="#ffd900"/></linearGradient><linearGradient id="g70"><stop offset="0" stop-color="#00ffd6"/><stop offset="0.26" stop-color="#00ffc4"/><stop offset="0.471" stop-color="#00ffb1"/><stop offset="0.481" stop-color="#2effb0"/><stop offset="0.49" stop-color="#41ffae"/><stop offset="0.51" stop-color="#5affac"/><stop offset="0.558" stop-color="#80ffa6"/><stop offset="0.635" stop-color="#abff9b"/><stop offset="0.76" stop-color="#dfff84"/><stop offset="0.856" stop-color="#fffd6a"/><stop offset="0.942" stop-color="#ffe43c"/><stop offset="0.971" stop-color="#ffdd22"/><stop offset="0.981" stop-color="#ffda0b"/><stop offset="0.99" stop-color="#ffd800"/><stop offset="1" stop-color="#ffd600"/></linearGradient><linearGradient id="g71"><stop offset="0" stop-color="#00ffd7"/><stop offset="0.467" stop-color="#00ffb3"/><stop offset="0.476" stop-color="#33ffb2"/><stop offset="0.486" stop-color="#44ffb1"/><stop offset="0.505" stop-color="#5cffae"/><stop offset="0.552" stop-color="#82ffa8"/><stop offset="0.629" stop-color="#acff9e"/><stop offset="0.743" stop-color="#ddff89"/><stop offset="0.838" stop-color="#ffff72"/><stop offset="0.943" stop-color="#ffe03b"/><stop offset="0.971" stop-color="#ffd922"/><stop offset="0.981" stop-color="#ffd70c"/><stop offset="0.99" stop-color="#ffd500"/><stop offset="1" stop-color="#ffd300"/></linearGradient><linearGradient id="g72"><stop offset="0" stop-color="#00ffd9"/><stop offset="0.453" stop-color="#00ffb6"/><stop offset="0.462" stop-color="#18ffb5"/><stop offset="0.472" stop-color="#37ffb4"/><stop offset="0.481" stop-color="#47ffb3"/><stop offset="0.5" stop-color="#5effb0"/><stop offset="0.557" stop-color="#8affa9"/><stop offset="0.642" stop-color="#b7ff9d"/><stop offset="0.755" stop-color="#e5ff88"/><stop offset="0.83" stop-color="#fffd74"/><stop offset="0.943" stop-color="#ffdc3b"/><stop offset="0.972" stop-color="#ffd521"/><stop offset="0.981" stop-color="#ffd30d"/><stop offset="0.991" stop-color="#ffd100"/><stop offset="1" stop-color="#ffcf00"/></linearGradient><linearGradient id="g73"><stop offset="0" stop-color="#00ffda"/><stop offset="0.449" stop-color="#00ffb8"/><stop offset="0.458" stop-color="#22ffb7"/><stop offset="0.467" stop-color="#3bffb6"/><stop offset="0.495" stop-color="#60ffb3"/><stop offset="0.551" stop-color="#8bffac"/><stop offset="0.636" stop-color="#b8ffa0"/><stop offset="0.813" stop-color="#ffff7b"/><stop offset="0.897" stop-color="#ffe455"/><stop offset="0.944" stop-color="#ffd83b"/><stop offset="0.972" stop-color="#ffd221"/><stop offset="0.981" stop-color="#ffd00e"/><stop offset="0.991" stop-color="#ffce00"/><stop offset="1" stop-color="#ffcc00"/></linearGradient><linearGradient id="g74"><stop offset="0" stop-color="#00ffdc"/><stop offset="0.444" stop-color="#00ffba"/><stop offset="0.454" stop-color="#28ffb9"/><stop offset="0.463" stop-color="#3effb8"/><stop offset="0.491" stop-color="#62ffb5"/><stop offset="0.546" stop-color="#8dffae"/><stop offset="0.639" stop-color="#beffa1"/><stop offset="0.796" stop-color="#feff81"/><stop offset="0.852" stop-color="#ffee6a"/><stop offset="0.944" stop-color="#ffd53a"/><stop offset="0.972" stop-color="#ffce21"/><stop offset="0.991" stop-color="#ffca00"/><stop offset="1" stop-color="#ffc900"/></linearGradient><linearGradient id="g75"><stop offset="0" stop-color="#00ffdd"/><stop offset="0.435" stop-color="#00ffbc"/><stop offset="0.454" stop-color="#38ffba"/><stop offset="0.472" stop-color="#55ffb8"/><stop offset="0.491" stop-color="#69ffb6"/><stop offset="0.556" stop-color="#97ffae"/><stop offset="0.648" stop-color="#c6ffa1"/><stop offset="0.787" stop-color="#ffff85"/><stop offset="0.88" stop-color="#ffe25d"/><stop offset="0.954" stop-color="#ffcf33"/><stop offset="0.972" stop-color="#ffcb21"/><stop offset="0.991" stop-color="#ffc700"/><stop offset="1" stop-color="#ffc500"/></linearGradient><linearGradient id="g76"><stop offset="0" stop-color="#00ffdf"/><stop offset="0.431" stop-color="#00ffbf"/><stop offset="0.44" stop-color="#23ffbe"/><stop offset="0.45" stop-color="#3cffbd"/><stop offset="0.468" stop-color="#57ffbb"/><stop offset="0.486" stop-color="#6bffb9"/><stop offset="0.55" stop-color="#99ffb1"/><stop offset="0.651" stop-color="#ccffa2"/><stop offset="0.78" stop-color="#fffe88"/><stop offset="0.89" stop-color="#ffdb57"/><stop offset="0.954" stop-color="#ffcc33"/><stop offset="0.972" stop-color="#ffc821"/><stop offset="0.991" stop-color="#ffc400"/><stop offset="1" stop-color="#ffc200"/></linearGradient><linearGradient id="g77"><stop offset="0" stop-color="#00ffe1"/><stop offset="0.427" stop-color="#00ffc1"/><stop offset="0.436" stop-color="#2affc0"/><stop offset="0.445" stop-color="#40ffbf"/><stop offset="0.464" stop-color="#5affbd"/><stop offset="0.482" stop-color="#6dffbb"/><stop offset="0.555" stop-color="#a0ffb2"/><stop offset="0.655" stop-color="#d2ffa3"/><stop offset="0.764" stop-color="#ffff8e"/><stop offset="0.891" stop-color="#ffd857"/><stop offset="0.955" stop-color="#ffc833"/><stop offset="0.973" stop-color="#ffc521"/><stop offset="0.991" stop-color="#ffc100"/><stop offset="1" stop-color="#ffbf00"/></linearGradient><linearGradient id="g78"><stop offset="0" stop-color="#00ffe2"/><stop offset="0.423" stop-color="#00ffc3"/><stop offset="0.432" stop-color="#2fffc2"/><stop offset="0.441" stop-color="#43ffc1"/><stop offset="0.459" stop-color="#5cffbf"/><stop offset="0.477" stop-color="#6fffbd"/><stop offset="0.55" stop-color="#a2ffb4"/><stop offset="0.658" stop-color="#d7ffa4"/><stop offset="0.757" stop-color="#fffe90"/><stop offset="0.901" stop-color="#ffd252"/><stop offset="0.955" stop-color="#ffc532"/><stop offset="0.973" stop-color="#ffc121"/><stop offset="0.991" stop-color="#ffbe00"/><stop offset="1" stop-color="#ffbc00"/></linearGradient><linearGradient id="g79"><stop offset="0" stop-color="#00ffe4"/><stop offset="0.42" stop-color="#00ffc5"/><stop offset="0.429" stop-color="#34ffc4"/><stop offset="0.446" stop-color="#54ffc2"/><stop offset="0.473" stop-color="#71ffbf"/><stop offset="0.545" stop-color="#a3ffb7"/><stop offset="0.661" stop-color="#ddffa5"/><stop offset="0.741" stop-color="#ffff96"/><stop offset="0.902" stop-color="#ffce51"/><stop offset="0.955" stop-color="#ffc232"/><stop offset="0.973" stop-color="#ffbe21"/><stop offset="0.991" stop-color="#ffbb00"/><stop offset="1" stop-color="#ffb900"/></linearGradient><linearGradient id="g80"><stop offset="0" stop-color="#00ffe5"/><stop offset="0.407" stop-color="#00ffc8"/><stop offset="0.425" stop-color="#39ffc6"/><stop offset="0.434" stop-color="#4affc5"/><stop offset="0.451" stop-color="#61ffc3"/><stop offset="0.478" stop-color="#7affc0"/><stop offset="0.558" stop-color="#afffb7"/><stop offset="0.681" stop-color="#eaffa3"/><stop offset="0.735" stop-color="#fffd98"/><stop offset="0.823" stop-color="#ffdf73"/><stop offset="0.92" stop-color="#ffc647"/><stop offset="0.965" stop-color="#ffbd2a"/><stop offset="0.973" stop-color="#ffbb21"/><stop offset="0.991" stop-color="#ffb700"/><stop offset="1" stop-color="#ffb600"/></linearGradient><linearGradient id="g81"><stop offset="0" stop-color="#00ffe7"/><stop offset="0.404" stop-color="#00ffca"/><stop offset="0.412" stop-color="#23ffc9"/><stop offset="0.421" stop-color="#3dffc8"/><stop offset="0.43" stop-color="#4dffc7"/><stop offset="0.447" stop-color="#63ffc5"/><stop offset="0.474" stop-color="#7cffc3"/><stop offset="0.561" stop-color="#b6ffb8"/><stop offset="0.684" stop-color="#f0ffa5"/><stop offset="0.719" stop-color="#ffff9e"/><stop offset="0.807" stop-color="#ffe079"/><stop offset="0.921" stop-color="#ffc347"/><stop offset="0.965" stop-color="#ffba2a"/><stop offset="0.974" stop-color="#ffb821"/><stop offset="0.991" stop-color="#ffb400"/><stop offset="1" stop-color="#ffb300"/></linearGradient><linearGradient id="g82"><stop offset="0" stop-color="#00ffe9"/><stop offset="0.4" stop-color="#00ffcc"/><stop offset="0.409" stop-color="#2bffcb"/><stop offset="0.417" stop-color="#41ffca"/><stop offset="0.435" stop-color="#5cffc9"/><stop offset="0.47" stop-color="#7effc5"/><stop offset="0.557" stop-color="#b7ffba"/><stop offset="0.696" stop-color="#f9ffa4"/><stop offset="0.713" stop-color="#fffda0"/><stop offset="0.809" stop-color="#ffdc77"/><stop offset="0.93" stop-color="#ffbe42"/><stop offset="0.965" stop-color="#ffb62a"/><stop offset="0.974" stop-color="#ffb521"/><stop offset="0.991" stop-color="#ffb100"/><stop offset="1" stop-color="#ffb000"/></linearGradient><linearGradient id="g83"><stop offset="0" stop-color="#00ffea"/><stop offset="0.397" stop-color="#00ffce"/><stop offset="0.405" stop-color="#31ffcd"/><stop offset="0.414" stop-color="#45ffcc"/><stop offset="0.431" stop-color="#5effcb"/><stop offset="0.466" stop-color="#80ffc7"/><stop offset="0.509" stop-color="#a0ffc2"/><stop offset="0.56" stop-color="#beffbc"/><stop offset="0.698" stop-color="#ffffa6"/><stop offset="0.802" stop-color="#ffda79"/><stop offset="0.931" stop-color="#ffba41"/><stop offset="0.966" stop-color="#ffb32a"/><stop offset="0.974" stop-color="#ffb221"/><stop offset="0.991" stop-color="#ffae00"/><stop offset="1" stop-color="#ffad00"/></linearGradient><linearGradient id="g84"><stop offset="0" stop-color="#00ffec"/><stop offset="0.388" stop-color="#00ffd1"/><stop offset="0.397" stop-color="#25ffd0"/><stop offset="0.405" stop-color="#3fffcf"/><stop offset="0.422" stop-color="#5bffcd"/><stop offset="0.457" stop-color="#7fffca"/><stop offset="0.543" stop-color="#b9ffc0"/><stop offset="0.681" stop-color="#fcffab"/><stop offset="0.802" stop-color="#ffd779"/><stop offset="0.931" stop-color="#ffb741"/><stop offset="0.966" stop-color="#ffb02a"/><stop offset="0.974" stop-color="#ffaf21"/><stop offset="0.991" stop-color="#ffac00"/><stop offset="1" stop-color="#ffaa00"/></linearGradient><linearGradient id="g85"><stop offset="0" stop-color="#00ffee"/><stop offset="0.385" stop-color="#00ffd3"/><stop offset="0.393" stop-color="#2dffd2"/><stop offset="0.402" stop-color="#43ffd1"/><stop offset="0.419" stop-color="#5effd0"/><stop offset="0.453" stop-color="#81ffcc"/><stop offset="0.538" stop-color="#bbffc2"/><stop offset="0.675" stop-color="#feffad"/><stop offset="0.795" stop-color="#ffd57b"/><stop offset="0.932" stop-color="#ffb440"/><stop offset="0.966" stop-color="#ffad2a"/><stop offset="0.974" stop-color="#ffac21"/><stop offset="0.991" stop-color="#ffa900"/><stop offset="1" stop-color="#ffa700"/></linearGradient><linearGradient id="g86"><stop offset="0" stop-color="#00fff0"/><stop offset="0.381" stop-color="#00ffd5"/><stop offset="0.39" stop-color="#33ffd4"/><stop offset="0.398" stop-color="#47ffd4"/><stop offset="0.415" stop-color="#60ffd2"/><stop offset="0.441" stop-color="#7bffcf"/><stop offset="0.475" stop-color="#97ffcc"/><stop offset="0.525" stop-color="#b8ffc6"/><stop offset="0.661" stop-color="#fcffb2"/><stop offset="0.788" stop-color="#ffd47d"/><stop offset="0.924" stop-color="#ffb345"/><stop offset="0.966" stop-color="#ffaa29"/><stop offset="0.975" stop-color="#ffa921"/><stop offset="0.992" stop-color="#ffa600"/><stop offset="1" stop-color="#ffa400"/></linearGradient><linearGradient id="g87"><stop offset="0" stop-color="#00fff1"/><stop offset="0.37" stop-color="#00ffd8"/><stop offset="0.378" stop-color="#11ffd7"/><stop offset="0.387" stop-color="#38ffd7"/><stop offset="0.395" stop-color="#4affd6"/><stop offset="0.412" stop-color="#63ffd4"/><stop offset="0.437" stop-color="#7dffd2"/><stop offset="0.471" stop-color="#99ffce"/><stop offset="0.521" stop-color="#b9ffc8"/><stop offset="0.655" stop-color="#feffb5"/><stop offset="0.773" stop-color="#ffd482"/><stop offset="0.924" stop-color="#ffb044"/><stop offset="0.966" stop-color="#ffa729"/><stop offset="0.975" stop-color="#ffa621"/><stop offset="0.992" stop-color="#ffa300"/><stop offset="1" stop-color="#ffa100"/></linearGradient><linearGradient id="g88"><stop offset="0" stop-color="#00fff3"/><stop offset="0.367" stop-color="#00ffda"/><stop offset="0.383" stop-color="#3dffd9"/><stop offset="0.392" stop-color="#4effd8"/><stop offset="0.408" stop-color="#66ffd6"/><stop offset="0.433" stop-color="#80ffd4"/><stop offset="0.467" stop-color="#9bffd0"/><stop offset="0.517" stop-color="#bbffcb"/><stop offset="0.642" stop-color="#fcffb9"/><stop offset="0.775" stop-color="#ffd081"/><stop offset="0.925" stop-color="#ffac44"/><stop offset="0.967" stop-color="#ffa429"/><stop offset="0.983" stop-color="#ffa113"/><stop offset="0.992" stop-color="#ffa000"/><stop offset="1" stop-color="#ff9e00"/></linearGradient><linearGradient id="g89"><stop offset="0" stop-color="#00fff5"/><stop offset="0.364" stop-color="#00ffdd"/><stop offset="0.372" stop-color="#2affdc"/><stop offset="0.38" stop-color="#42ffdb"/><stop offset="0.397" stop-color="#5effda"/><stop offset="0.43" stop-color="#82ffd6"/><stop offset="0.512" stop-color="#bdffcd"/><stop offset="0.636" stop-color="#ffffbc"/><stop offset="0.76" stop-color="#ffd186"/><stop offset="0.926" stop-color="#ffa943"/><stop offset="0.967" stop-color="#ffa229"/><stop offset="0.983" stop-color="#ff9f13"/><stop offset="0.992" stop-color="#ff9d00"/><stop offset="1" stop-color="#ff9c00"/></linearGradient><linearGradient id="g90"><stop offset="0" stop-color="#00fff7"/><stop offset="0.361" stop-color="#00ffdf"/><stop offset="0.369" stop-color="#31ffde"/><stop offset="0.377" stop-color="#46ffdd"/><stop offset="0.393" stop-color="#61ffdc"/><stop offset="0.418" stop-color="#7cffda"/><stop offset="0.451" stop-color="#99ffd6"/><stop offset="0.5" stop-color="#baffd1"/><stop offset="0.623" stop-color="#fdffc0"/><stop offset="0.762" stop-color="#ffcd85"/><stop offset="0.926" stop-color="#ffa643"/><stop offset="0.967" stop-color="#ff9f29"/><stop offset="0.984" stop-color="#ff9c13"/><stop offset="0.992" stop-color="#ff9a00"/><stop offset="1" stop-color="#ff9900"/></linearGradient><linearGradient id="g91"><stop offset="0" stop-color="#00fff8"/><stop offset="0.352" stop-color="#00ffe2"/><stop offset="0.361" stop-color="#23ffe1"/><stop offset="0.369" stop-color="#3fffe0"/><stop offset="0.377" stop-color="#50ffdf"/><stop offset="0.393" stop-color="#68ffde"/><stop offset="0.418" stop-color="#82ffdc"/><stop offset="0.492" stop-color="#baffd4"/><stop offset="0.615" stop-color="#fdffc4"/><stop offset="0.754" stop-color="#ffcc87"/><stop offset="0.926" stop-color="#ffa343"/><stop offset="0.967" stop-color="#ff9c29"/><stop offset="0.984" stop-color="#ff9914"/><stop offset="0.992" stop-color="#ff9700"/><stop offset="1" stop-color="#ff9600"/></linearGradient><linearGradient id="g92"><stop offset="0" stop-color="#00fffa"/><stop offset="0.35" stop-color="#00ffe4"/><stop offset="0.358" stop-color="#2cffe3"/><stop offset="0.366" stop-color="#43ffe2"/><stop offset="0.382" stop-color="#60ffe1"/><stop offset="0.407" stop-color="#7cffdf"/><stop offset="0.439" stop-color="#99ffdc"/><stop offset="0.488" stop-color="#bcffd6"/><stop offset="0.61" stop-color="#fffec6"/><stop offset="0.667" stop-color="#ffe5aa"/><stop offset="0.74" stop-color="#ffcd8c"/><stop offset="0.927" stop-color="#ffa042"/><stop offset="0.967" stop-color="#ff9928"/><stop offset="0.984" stop-color="#ff9614"/><stop offset="0.992" stop-color="#ff9500"/><stop offset="1" stop-color="#ff9300"/></linearGradient><linearGradient id="g93"><stop offset="0" stop-color="#00fffc"/><stop offset="0.347" stop-color="#00ffe6"/><stop offset="0.355" stop-color="#33ffe5"/><stop offset="0.363" stop-color="#48ffe5"/><stop offset="0.379" stop-color="#63ffe3"/><stop offset="0.403" stop-color="#7fffe1"/><stop offset="0.476" stop-color="#b9ffda"/><stop offset="0.597" stop-color="#feffcb"/><stop offset="0.669" stop-color="#ffe0a8"/><stop offset="0.742" stop-color="#ffc88b"/><stop offset="0.927" stop-color="#ff9d42"/><stop offset="0.968" stop-color="#ff9628"/><stop offset="0.984" stop-color="#ff9314"/><stop offset="0.992" stop-color="#ff9200"/><stop offset="1" stop-color="#ff9000"/></linearGradient><linearGradient id="g94"><stop offset="0" stop-color="#00fffe"/><stop offset="0.336" stop-color="#00ffe9"/><stop offset="0.344" stop-color="#0bffe8"/><stop offset="0.352" stop-color="#39ffe8"/><stop offset="0.36" stop-color="#4cffe7"/><stop offset="0.376" stop-color="#66ffe6"/><stop offset="0.4" stop-color="#81ffe4"/><stop offset="0.432" stop-color="#9effe1"/><stop offset="0.48" stop-color="#c0ffdc"/><stop offset="0.592" stop-color="#fffecd"/><stop offset="0.656" stop-color="#ffe2ad"/><stop offset="0.728" stop-color="#ffc98f"/><stop offset="0.928" stop-color="#ff9a41"/><stop offset="0.968" stop-color="#ff9328"/><stop offset="0.984" stop-color="#ff9014"/><stop offset="0.992" stop-color="#ff8f00"/><stop offset="1" stop-color="#ff8e00"/></linearGradient><linearGradient id="g95"><stop offset="0" stop-color="#00feff"/><stop offset="0.333" stop-color="#00ffeb"/><stop offset="0.349" stop-color="#3fffea"/><stop offset="0.357" stop-color="#50ffea"/><stop offset="0.373" stop-color="#69ffe8"/><stop offset="0.397" stop-color="#84ffe6"/><stop offset="0.468" stop-color="#bdffdf"/><stop offset="0.579" stop-color="#feffd2"/><stop offset="0.651" stop-color="#ffe0ae"/><stop offset="0.722" stop-color="#ffc791"/><stop offset="0.929" stop-color="#ff9741"/><stop offset="0.968" stop-color="#ff9028"/><stop offset="0.984" stop-color="#ff8e14"/><stop offset="0.992" stop-color="#ff8c00"/><stop offset="1" stop-color="#ff8b00"/></linearGradient><linearGradient id="g96"><stop offset="0" stop-color="#00fcff"/><stop offset="0.331" stop-color="#00ffee"/><stop offset="0.339" stop-color="#2bffed"/><stop offset="0.346" stop-color="#44ffed"/><stop offset="0.362" stop-color="#61ffeb"/><stop offset="0.386" stop-color="#7effe9"/><stop offset="0.417" stop-color="#9cffe6"/><stop offset="0.465" stop-color="#bfffe2"/><stop offset="0.575" stop-color="#fffed3"/><stop offset="0.638" stop-color="#ffe1b3"/><stop offset="0.717" stop-color="#ffc692"/><stop offset="0.929" stop-color="#ff9541"/><stop offset="0.969" stop-color="#ff8d28"/><stop offset="0.984" stop-color="#ff8b15"/><stop offset="0.992" stop-color="#ff8900"/><stop offset="1" stop-color="#ff8800"/></linearGradient><linearGradient id="g97"><stop offset="0" stop-color="#00fbff"/><stop offset="0.094" stop-color="#00ffff"/><stop offset="0.323" stop-color="#00fff1"/><stop offset="0.331" stop-color="#13fff0"/><stop offset="0.339" stop-color="#3bffef"/><stop offset="0.346" stop-color="#4effef"/><stop offset="0.362" stop-color="#68ffee"/><stop offset="0.386" stop-color="#84ffec"/><stop offset="0.417" stop-color="#a1ffe9"/><stop offset="0.465" stop-color="#c4ffe4"/><stop offset="0.567" stop-color="#fffdd6"/><stop offset="0.638" stop-color="#ffddb2"/><stop offset="0.717" stop-color="#ffc292"/><stop offset="0.929" stop-color="#ff9240"/><stop offset="0.969" stop-color="#ff8b28"/><stop offset="0.984" stop-color="#ff8815"/><stop offset="0.992" stop-color="#ff8700"/><stop offset="1" stop-color="#ff8500"/></linearGradient><linearGradient id="g98"><stop offset="0" stop-color="#00f9ff"/><stop offset="0.133" stop-color="#00ffff"/><stop offset="0.32" stop-color="#00fff3"/><stop offset="0.328" stop-color="#24fff2"/><stop offset="0.336" stop-color="#41fff2"/><stop offset="0.352" stop-color="#60fff1"/><stop offset="0.375" stop-color="#7effef"/><stop offset="0.406" stop-color="#9dffec"/><stop offset="0.445" stop-color="#bbffe8"/><stop offset="0.555" stop-color="#ffffdc"/><stop offset="0.625" stop-color="#ffdeb7"/><stop offset="0.703" stop-color="#ffc396"/><stop offset="0.805" stop-color="#ffa871"/><stop offset="0.93" stop-color="#ff8f40"/><stop offset="0.969" stop-color="#ff8828"/><stop offset="0.984" stop-color="#ff8515"/><stop offset="0.992" stop-color="#ff8400"/><stop offset="1" stop-color="#ff8300"/></linearGradient><linearGradient id="g99"><stop offset="0" stop-color="#00f7ff"/><stop offset="0.171" stop-color="#00ffff"/><stop offset="0.318" stop-color="#00fff5"/><stop offset="0.326" stop-color="#2efff5"/><stop offset="0.333" stop-color="#46fff4"/><stop offset="0.349" stop-color="#63fff3"/><stop offset="0.372" stop-color="#81fff1"/><stop offset="0.403" stop-color="#9fffef"/><stop offset="0.442" stop-color="#bdffeb"/><stop offset="0.543" stop-color="#fdffe0"/><stop offset="0.62" stop-color="#ffdcb8"/><stop offset="0.705" stop-color="#ffbf95"/><stop offset="0.806" stop-color="#ffa570"/><stop offset="0.93" stop-color="#ff8c40"/><stop offset="0.969" stop-color="#ff8528"/><stop offset="0.984" stop-color="#ff8215"/><stop offset="0.992" stop-color="#ff8100"/><stop offset="1" stop-color="#ff8000"/></linearGradient><linearGradient id="g100"><stop offset="0" stop-color="#00f5ff"/><stop offset="0.208" stop-color="#00ffff"/><stop offset="0.315" stop-color="#00fff8"/><stop offset="0.323" stop-color="#36fff7"/><stop offset="0.331" stop-color="#4bfff7"/><stop offset="0.346" stop-color="#67fff6"/><stop offset="0.362" stop-color="#7bfff4"/><stop offset="0.392" stop-color="#9bfff2"/><stop offset="0.431" stop-color="#baffef"/><stop offset="0.538" stop-color="#fffee3"/><stop offset="0.608" stop-color="#ffddbd"/><stop offset="0.692" stop-color="#ffbf99"/><stop offset="0.8" stop-color="#ffa372"/><stop offset="0.931" stop-color="#ff893f"/><stop offset="0.969" stop-color="#ff8227"/><stop offset="0.985" stop-color="#ff7f15"/><stop offset="0.992" stop-color="#ff7e00"/><stop offset="1" stop-color="#ff7d00"/></linearGradient><linearGradient id="g101"><stop offset="0" stop-color="#00f3ff"/><stop offset="0.244" stop-color="#00ffff"/><stop offset="0.305" stop-color="#00fffb"/><stop offset="0.313" stop-color="#13fffa"/><stop offset="0.321" stop-color="#3cfffa"/><stop offset="0.328" stop-color="#50fff9"/><stop offset="0.344" stop-color="#6afff8"/><stop offset="0.359" stop-color="#7efff7"/><stop offset="0.389" stop-color="#9dfff5"/><stop offset="0.427" stop-color="#bdfff1"/><stop offset="0.527" stop-color="#feffe7"/><stop offset="0.603" stop-color="#ffdbbe"/><stop offset="0.687" stop-color="#ffbd9a"/><stop offset="0.794" stop-color="#ffa174"/><stop offset="0.931" stop-color="#ff863f"/><stop offset="0.969" stop-color="#ff7f27"/><stop offset="0.985" stop-color="#ff7d15"/><stop offset="0.992" stop-color="#ff7b00"/><stop offset="1" stop-color="#ff7a00"/></linearGradient><linearGradient id="g102"><stop offset="0" stop-color="#00f1ff"/><stop offset="0.303" stop-color="#00fffe"/><stop offset="0.311" stop-color="#25fffd"/><stop offset="0.318" stop-color="#42fffd"/><stop offset="0.333" stop-color="#62fffb"/><stop offset="0.356" stop-color="#81fffa"/><stop offset="0.386" stop-color="#a0fff7"/><stop offset="0.424" stop-color="#bffff4"/><stop offset="0.523" stop-color="#fffee9"/><stop offset="0.591" stop-color="#ffdcc3"/><stop offset="0.682" stop-color="#ffbb9c"/><stop offset="0.795" stop-color="#ff9e73"/><stop offset="0.932" stop-color="#ff833f"/><stop offset="0.97" stop-color="#ff7c27"/><stop offset="0.985" stop-color="#ff7a15"/><stop offset="0.992" stop-color="#ff7800"/><stop offset="1" stop-color="#ff7700"/></linearGradient><linearGradient id="g103"><stop offset="0" stop-color="#00f0ff"/><stop offset="0.303" stop-color="#00feff"/><stop offset="0.311" stop-color="#38ffff"/><stop offset="0.318" stop-color="#4dffff"/><stop offset="0.333" stop-color="#69fffe"/><stop offset="0.348" stop-color="#7efffd"/><stop offset="0.379" stop-color="#9efffb"/><stop offset="0.417" stop-color="#befff7"/><stop offset="0.515" stop-color="#fffdec"/><stop offset="0.583" stop-color="#ffdbc5"/><stop offset="0.674" stop-color="#ffba9e"/><stop offset="0.788" stop-color="#ff9d75"/><stop offset="0.932" stop-color="#ff803f"/><stop offset="0.97" stop-color="#ff7927"/><stop offset="0.985" stop-color="#ff7716"/><stop offset="0.992" stop-color="#ff7600"/><stop offset="1" stop-color="#ff7400"/></linearGradient><linearGradient id="g104"><stop offset="0" stop-color="#00eeff"/><stop offset="0.293" stop-color="#00fbff"/><stop offset="0.301" stop-color="#1afbff"/><stop offset="0.308" stop-color="#3efcff"/><stop offset="0.316" stop-color="#51fcff"/><stop offset="0.331" stop-color="#6cfdff"/><stop offset="0.346" stop-color="#81feff"/><stop offset="0.368" stop-color="#99fffe"/><stop offset="0.406" stop-color="#bbfffb"/><stop offset="0.504" stop-color="#fffff2"/><stop offset="0.579" stop-color="#ffd8c6"/><stop offset="0.669" stop-color="#ffb89f"/><stop offset="0.782" stop-color="#ff9b77"/><stop offset="0.932" stop-color="#ff7d3e"/><stop offset="0.97" stop-color="#ff7627"/><stop offset="0.985" stop-color="#ff7416"/><stop offset="0.992" stop-color="#ff7300"/><stop offset="1" stop-color="#ff7100"/></linearGradient><linearGradient id="g105"><stop offset="0" stop-color="#00ecff"/><stop offset="0.291" stop-color="#00f8ff"/><stop offset="0.299" stop-color="#28f9ff"/><stop offset="0.306" stop-color="#44f9ff"/><stop offset="0.321" stop-color="#63faff"/><stop offset="0.343" stop-color="#82fcff"/><stop offset="0.373" stop-color="#a3feff"/><stop offset="0.41" stop-color="#c3fffd"/><stop offset="0.47" stop-color="#eefff8"/><stop offset="0.5" stop-color="#fffcf3"/><stop offset="0.575" stop-color="#ffd6c7"/><stop offset="0.664" stop-color="#ffb6a0"/><stop offset="0.784" stop-color="#ff9876"/><stop offset="0.933" stop-color="#ff7a3e"/><stop offset="0.97" stop-color="#ff7327"/><stop offset="0.985" stop-color="#ff7116"/><stop offset="0.993" stop-color="#ff7000"/><stop offset="1" stop-color="#ff6e00"/></linearGradient><linearGradient id="g106"><stop offset="0" stop-color="#00eaff"/><stop offset="0.289" stop-color="#00f6ff"/><stop offset="0.296" stop-color="#31f6ff"/><stop offset="0.304" stop-color="#48f7ff"/><stop offset="0.319" stop-color="#65f8ff"/><stop offset="0.333" stop-color="#7bf9ff"/><stop offset="0.363" stop-color="#9cfbff"/><stop offset="0.407" stop-color="#c5feff"/><stop offset="0.489" stop-color="#fffef9"/><stop offset="0.563" stop-color="#ffd7cc"/><stop offset="0.659" stop-color="#ffb4a1"/><stop offset="0.778" stop-color="#ff9677"/><stop offset="0.933" stop-color="#ff773d"/><stop offset="0.97" stop-color="#ff7027"/><stop offset="0.985" stop-color="#ff6e16"/><stop offset="0.993" stop-color="#ff6d00"/><stop offset="1" stop-color="#ff6b00"/></linearGradient><linearGradient id="g107"><stop offset="0" stop-color="#00e8ff"/><stop offset="0.287" stop-color="#00f3ff"/><stop offset="0.294" stop-color="#39f4ff"/><stop offset="0.309" stop-color="#5cf5ff"/><stop offset="0.324" stop-color="#73f5ff"/><stop offset="0.346" stop-color="#8ef7ff"/><stop offset="0.382" stop-color="#b2f9ff"/><stop offset="0.478" stop-color="#fefffd"/><stop offset="0.559" stop-color="#ffd5cc"/><stop offset="0.654" stop-color="#ffb3a2"/><stop offset="0.772" stop-color="#ff9479"/><stop offset="0.934" stop-color="#ff743d"/><stop offset="0.971" stop-color="#ff6d27"/><stop offset="0.985" stop-color="#ff6b16"/><stop offset="0.993" stop-color="#ff6a00"/><stop offset="1" stop-color="#ff6800"/></linearGradient><linearGradient id="g108"><stop offset="0" stop-color="#00e7ff"/><stop offset="0.277" stop-color="#00f1ff"/><stop offset="0.292" stop-color="#3ef1ff"/><stop offset="0.307" stop-color="#5ff2ff"/><stop offset="0.321" stop-color="#75f3ff"/><stop offset="0.343" stop-color="#8ff4ff"/><stop offset="0.38" stop-color="#b3f6ff"/><stop offset="0.474" stop-color="#fffdff"/><stop offset="0.547" stop-color="#ffd6d1"/><stop offset="0.65" stop-color="#ffb1a4"/><stop offset="0.774" stop-color="#ff9178"/><stop offset="0.934" stop-color="#ff713d"/><stop offset="0.971" stop-color="#ff6a26"/><stop offset="0.985" stop-color="#ff6816"/><stop offset="0.993" stop-color="#ff6700"/><stop offset="1" stop-color="#ff6500"/></linearGradient><linearGradient id="g109"><stop offset="0" stop-color="#00e5ff"/><stop offset="0.277" stop-color="#00eeff"/><stop offset="0.285" stop-color="#33efff"/><stop offset="0.292" stop-color="#49efff"/><stop offset="0.307" stop-color="#65f0ff"/><stop offset="0.321" stop-color="#7af0ff"/><stop offset="0.38" stop-color="#b6f4ff"/><stop offset="0.474" stop-color="#fff8fd"/><stop offset="0.547" stop-color="#ffd2d0"/><stop offset="0.65" stop-color="#ffada3"/><stop offset="0.774" stop-color="#ff8d78"/><stop offset="0.934" stop-color="#ff6e3d"/><stop offset="0.971" stop-color="#ff6727"/><stop offset="0.985" stop-color="#ff6516"/><stop offset="0.993" stop-color="#ff6300"/><stop offset="1" stop-color="#ff6200"/></linearGradient><linearGradient id="g110"><stop offset="0" stop-color="#00e3ff"/><stop offset="0.268" stop-color="#00ebff"/><stop offset="0.275" stop-color="#0fecff"/><stop offset="0.283" stop-color="#3aecff"/><stop offset="0.29" stop-color="#4decff"/><stop offset="0.304" stop-color="#68edff"/><stop offset="0.319" stop-color="#7ceeff"/><stop offset="0.377" stop-color="#b6f1ff"/><stop offset="0.471" stop-color="#fff5fd"/><stop offset="0.543" stop-color="#ffcfd1"/><stop offset="0.645" stop-color="#ffaba4"/><stop offset="0.768" stop-color="#ff8c79"/><stop offset="0.935" stop-color="#ff6b3c"/><stop offset="0.978" stop-color="#ff6320"/><stop offset="0.986" stop-color="#ff6116"/><stop offset="0.993" stop-color="#ff6000"/><stop offset="1" stop-color="#ff5f00"/></linearGradient><linearGradient id="g111"><stop offset="0" stop-color="#00e1ff"/><stop offset="0.266" stop-color="#00e9ff"/><stop offset="0.273" stop-color="#23e9ff"/><stop offset="0.281" stop-color="#40eaff"/><stop offset="0.295" stop-color="#5feaff"/><stop offset="0.317" stop-color="#7debff"/><stop offset="0.374" stop-color="#b7eeff"/><stop offset="0.468" stop-color="#fff2fe"/><stop offset="0.54" stop-color="#ffcdd1"/><stop offset="0.64" stop-color="#ffa9a5"/><stop offset="0.763" stop-color="#ff8a7b"/><stop offset="0.935" stop-color="#ff673c"/><stop offset="0.978" stop-color="#ff5f20"/><stop offset="0.986" stop-color="#ff5e16"/><stop offset="0.993" stop-color="#ff5d00"/><stop offset="1" stop-color="#ff5c00"/></linearGradient><linearGradient id="g112"><stop offset="0" stop-color="#00dfff"/><stop offset="0.264" stop-color="#00e7ff"/><stop offset="0.271" stop-color="#2ee7ff"/><stop offset="0.279" stop-color="#45e7ff"/><stop offset="0.293" stop-color="#61e8ff"/><stop offset="0.307" stop-color="#76e8ff"/><stop offset="0.364" stop-color="#b1ebff"/><stop offset="0.464" stop-color="#fff0fe"/><stop offset="0.536" stop-color="#ffcbd2"/><stop offset="0.636" stop-color="#ffa7a6"/><stop offset="0.764" stop-color="#ff867a"/><stop offset="0.936" stop-color="#ff643c"/><stop offset="0.979" stop-color="#ff5c20"/><stop offset="0.986" stop-color="#ff5b16"/><stop offset="0.993" stop-color="#ff5900"/><stop offset="1" stop-color="#ff5800"/></linearGradient><linearGradient id="g113"><stop offset="0" stop-color="#00deff"/><stop offset="0.262" stop-color="#00e4ff"/><stop offset="0.27" stop-color="#35e4ff"/><stop offset="0.277" stop-color="#49e5ff"/><stop offset="0.291" stop-color="#64e5ff"/><stop offset="0.305" stop-color="#78e6ff"/><stop offset="0.362" stop-color="#b2e8ff"/><stop offset="0.461" stop-color="#ffedfe"/><stop offset="0.539" stop-color="#ffc5cf"/><stop offset="0.638" stop-color="#ffa3a4"/><stop offset="0.759" stop-color="#ff847b"/><stop offset="0.872" stop-color="#ff6d55"/><stop offset="0.936" stop-color="#ff613c"/><stop offset="0.979" stop-color="#ff5920"/><stop offset="0.986" stop-color="#ff5716"/><stop offset="0.993" stop-color="#ff5600"/><stop offset="1" stop-color="#ff5500"/></linearGradient><linearGradient id="g114"><stop offset="0" stop-color="#00dcff"/><stop offset="0.255" stop-color="#00e2ff"/><stop offset="0.262" stop-color="#27e2ff"/><stop offset="0.27" stop-color="#41e2ff"/><stop offset="0.284" stop-color="#5fe3ff"/><stop offset="0.305" stop-color="#7de3ff"/><stop offset="0.369" stop-color="#bbe6ff"/><stop offset="0.461" stop-color="#ffe8fc"/><stop offset="0.532" stop-color="#ffc4d2"/><stop offset="0.631" stop-color="#ffa2a6"/><stop offset="0.752" stop-color="#ff837d"/><stop offset="0.929" stop-color="#ff5f3f"/><stop offset="0.972" stop-color="#ff5626"/><stop offset="0.986" stop-color="#ff5417"/><stop offset="0.993" stop-color="#ff5200"/><stop offset="1" stop-color="#ff5100"/></linearGradient><linearGradient id="g115"><stop offset="0" stop-color="#00daff"/><stop offset="0.254" stop-color="#00dfff"/><stop offset="0.261" stop-color="#30dfff"/><stop offset="0.268" stop-color="#46e0ff"/><stop offset="0.282" stop-color="#61e0ff"/><stop offset="0.296" stop-color="#76e1ff"/><stop offset="0.324" stop-color="#95e1ff"/><stop offset="0.359" stop-color="#b5e3ff"/><stop offset="0.458" stop-color="#ffe5fd"/><stop offset="0.535" stop-color="#ffbfcf"/><stop offset="0.634" stop-color="#ff9ea5"/><stop offset="0.754" stop-color="#ff7f7c"/><stop offset="0.93" stop-color="#ff5b3f"/><stop offset="0.972" stop-color="#ff5326"/><stop offset="0.986" stop-color="#ff5017"/><stop offset="0.993" stop-color="#ff4f00"/><stop offset="1" stop-color="#ff4d00"/></linearGradient><linearGradient id="g116"><stop offset="0" stop-color="#00d8ff"/><stop offset="0.245" stop-color="#00ddff"/><stop offset="0.252" stop-color="#06ddff"/><stop offset="0.259" stop-color="#38ddff"/><stop offset="0.266" stop-color="#4addff"/><stop offset="0.28" stop-color="#64deff"/><stop offset="0.294" stop-color="#78deff"/><stop offset="0.322" stop-color="#96dfff"/><stop offset="0.357" stop-color="#b6e0ff"/><stop offset="0.455" stop-color="#ffe2fd"/><stop offset="0.531" stop-color="#ffbdd0"/><stop offset="0.629" stop-color="#ff9ba6"/><stop offset="0.748" stop-color="#ff7d7d"/><stop offset="0.93" stop-color="#ff573e"/><stop offset="0.972" stop-color="#ff4f26"/><stop offset="0.986" stop-color="#ff4c17"/><stop offset="0.993" stop-color="#ff4b00"/><stop offset="1" stop-color="#ff4900"/></linearGradient><linearGradient id="g117"><stop offset="0" stop-color="#00d6ff"/><stop offset="0.243" stop-color="#00daff"/><stop offset="0.257" stop-color="#3edbff"/><stop offset="0.271" stop-color="#5cdbff"/><stop offset="0.292" stop-color="#79dbff"/><stop offset="0.354" stop-color="#b7ddff"/><stop offset="0.451" stop-color="#ffdffd"/><stop offset="0.528" stop-color="#ffbad0"/><stop offset="0.625" stop-color="#ff99a7"/><stop offset="0.743" stop-color="#ff7b7f"/><stop offset="0.931" stop-color="#ff543e"/><stop offset="0.972" stop-color="#ff4b26"/><stop offset="0.986" stop-color="#ff4817"/><stop offset="0.993" stop-color="#ff4600"/><stop offset="1" stop-color="#ff4500"/></linearGradient><linearGradient id="g118"><stop offset="0" stop-color="#00d5ff"/><stop offset="0.241" stop-color="#00d8ff"/><stop offset="0.248" stop-color="#2cd8ff"/><stop offset="0.255" stop-color="#43d8ff"/><stop offset="0.269" stop-color="#5fd9ff"/><stop offset="0.29" stop-color="#7bd9ff"/><stop offset="0.352" stop-color="#b7daff"/><stop offset="0.448" stop-color="#ffdcfe"/><stop offset="0.524" stop-color="#ffb8d1"/><stop offset="0.621" stop-color="#ff97a8"/><stop offset="0.738" stop-color="#ff7980"/><stop offset="0.931" stop-color="#ff503e"/><stop offset="0.972" stop-color="#ff4726"/><stop offset="0.986" stop-color="#ff4317"/><stop offset="0.993" stop-color="#ff4200"/><stop offset="1" stop-color="#ff4000"/></linearGradient><linearGradient id="g119"><stop offset="0" stop-color="#00d3ff"/><stop offset="0.234" stop-color="#00d6ff"/><stop offset="0.241" stop-color="#17d6ff"/><stop offset="0.248" stop-color="#3ad6ff"/><stop offset="0.255" stop-color="#4bd6ff"/><stop offset="0.283" stop-color="#77d6ff"/><stop offset="0.338" stop-color="#aed7ff"/><stop offset="0.441" stop-color="#fddaff"/><stop offset="0.524" stop-color="#ffb4d0"/><stop offset="0.614" stop-color="#ff96aa"/><stop offset="0.931" stop-color="#ff4c3e"/><stop offset="0.972" stop-color="#ff4226"/><stop offset="0.986" stop-color="#ff3f17"/><stop offset="0.993" stop-color="#ff3d00"/><stop offset="1" stop-color="#ff3b00"/></linearGradient><linearGradient id="g120"><stop offset="0" stop-color="#00d1ff"/><stop offset="0.233" stop-color="#00d3ff"/><stop offset="0.24" stop-color="#26d3ff"/><stop offset="0.247" stop-color="#3fd3ff"/><stop offset="0.26" stop-color="#5cd4ff"/><stop offset="0.281" stop-color="#79d4ff"/><stop offset="0.308" stop-color="#96d4ff"/><stop offset="0.349" stop-color="#bbd5ff"/><stop offset="0.445" stop-color="#ffd5fc"/><stop offset="0.521" stop-color="#ffb1d0"/><stop offset="0.616" stop-color="#ff91a8"/><stop offset="0.863" stop-color="#ff5757"/><stop offset="0.932" stop-color="#ff473d"/><stop offset="0.979" stop-color="#ff3b1f"/><stop offset="0.986" stop-color="#ff3917"/><stop offset="0.993" stop-color="#ff3800"/><stop offset="1" stop-color="#ff3600"/></linearGradient><linearGradient id="g121"><stop offset="0" stop-color="#00cfff"/><stop offset="0.231" stop-color="#00d1ff"/><stop offset="0.238" stop-color="#30d1ff"/><stop offset="0.245" stop-color="#44d1ff"/><stop offset="0.259" stop-color="#5fd1ff"/><stop offset="0.279" stop-color="#7bd1ff"/><stop offset="0.306" stop-color="#98d2ff"/><stop offset="0.347" stop-color="#bbd2ff"/><stop offset="0.442" stop-color="#ffd2fc"/><stop offset="0.51" stop-color="#ffb2d4"/><stop offset="0.592" stop-color="#ff95b1"/><stop offset="0.932" stop-color="#ff423d"/><stop offset="0.98" stop-color="#ff361f"/><stop offset="0.986" stop-color="#ff3417"/><stop offset="0.993" stop-color="#ff3200"/><stop offset="1" stop-color="#ff2f00"/></linearGradient><linearGradient id="g122"><stop offset="0" stop-color="#00cdff"/><stop offset="0.223" stop-color="#00cfff"/><stop offset="0.23" stop-color="#0ecfff"/><stop offset="0.236" stop-color="#37cfff"/><stop offset="0.243" stop-color="#49cfff"/><stop offset="0.257" stop-color="#62cfff"/><stop offset="0.277" stop-color="#7dcfff"/><stop offset="0.345" stop-color="#bccfff"/><stop offset="0.439" stop-color="#ffcffd"/><stop offset="0.507" stop-color="#ffafd5"/><stop offset="0.588" stop-color="#ff93b1"/><stop offset="0.932" stop-color="#ff3d3d"/><stop offset="0.98" stop-color="#ff2f1f"/><stop offset="0.986" stop-color="#ff2d17"/><stop offset="0.993" stop-color="#ff2a00"/><stop offset="1" stop-color="#ff2800"/></linearGradient><linearGradient id="g123"><stop offset="0" stop-color="#00ccff"/><stop offset="0.223" stop-color="#00ccff"/><stop offset="0.23" stop-color="#2bccff"/><stop offset="0.236" stop-color="#41ccff"/><stop offset="0.25" stop-color="#5cccff"/><stop offset="0.27" stop-color="#79ccff"/><stop offset="0.331" stop-color="#b3cdff"/><stop offset="0.432" stop-color="#fecdff"/><stop offset="0.5" stop-color="#ffaed7"/><stop offset="0.581" stop-color="#ff91b3"/><stop offset="0.932" stop-color="#ff383d"/><stop offset="0.98" stop-color="#ff2720"/><stop offset="0.986" stop-color="#ff2417"/><stop offset="0.993" stop-color="#ff2100"/><stop offset="1" stop-color="#ff1d00"/></linearGradient><linearGradient id="g124"><stop offset="0" stop-color="#00caff"/><stop offset="0.221" stop-color="#00caff"/><stop offset="0.228" stop-color="#30caff"/><stop offset="0.235" stop-color="#44caff"/><stop offset="0.248" stop-color="#5ecaff"/><stop offset="0.268" stop-color="#79caff"/><stop offset="0.295" stop-color="#96caff"/><stop offset="0.336" stop-color="#b8caff"/><stop offset="0.436" stop-color="#ffc8fc"/><stop offset="0.503" stop-color="#ffa9d5"/><stop offset="0.584" stop-color="#ff8eb2"/><stop offset="0.933" stop-color="#ff333e"/><stop offset="0.98" stop-color="#ff1f22"/><stop offset="0.993" stop-color="#ff1511"/><stop offset="1" stop-color="#ff0c00"/></linearGradient><linearGradient id="g125"><stop offset="0" stop-color="#00c8ff"/><stop offset="0.216" stop-color="#00c8ff"/><stop offset="0.223" stop-color="#17c8ff"/><stop offset="0.23" stop-color="#38c8ff"/><stop offset="0.236" stop-color="#49c8ff"/><stop offset="0.25" stop-color="#61c7ff"/><stop offset="0.27" stop-color="#7cc7ff"/><stop offset="0.331" stop-color="#b4c7ff"/><stop offset="0.432" stop-color="#fdc7ff"/><stop offset="0.507" stop-color="#ffa6d6"/><stop offset="0.595" stop-color="#ff89b0"/><stop offset="0.932" stop-color="#ff3043"/><stop offset="0.98" stop-color="#ff192b"/><stop offset="0.986" stop-color="#ff1227"/><stop offset="0.993" stop-color="#ff0021"/><stop offset="1" stop-color="#ff001a"/></linearGradient><linearGradient id="g126"><stop offset="0" stop-color="#00c6ff"/><stop offset="0.221" stop-color="#00c5ff"/><stop offset="0.228" stop-color="#2cc5ff"/><stop offset="0.234" stop-color="#42c5ff"/><stop offset="0.248" stop-color="#5cc5ff"/><stop offset="0.269" stop-color="#78c5ff"/><stop offset="0.331" stop-color="#b1c5ff"/><stop offset="0.441" stop-color="#ffc4ff"/><stop offset="0.51" stop-color="#ffa5d8"/><stop offset="0.6" stop-color="#ff87b2"/><stop offset="0.931" stop-color="#ff304a"/><stop offset="0.972" stop-color="#ff1d3a"/><stop offset="0.986" stop-color="#ff1234"/><stop offset="0.993" stop-color="#ff0030"/><stop offset="1" stop-color="#ff002c"/></linearGradient><linearGradient id="g127"><stop offset="0" stop-color="#00c4ff"/><stop offset="0.224" stop-color="#00c3ff"/><stop offset="0.231" stop-color="#33c3ff"/><stop offset="0.238" stop-color="#46c3ff"/><stop offset="0.252" stop-color="#5fc3ff"/><stop offset="0.273" stop-color="#79c3ff"/><stop offset="0.336" stop-color="#b2c2ff"/><stop offset="0.448" stop-color="#ffc0ff"/><stop offset="0.517" stop-color="#ffa3d9"/><stop offset="0.608" stop-color="#ff85b3"/><stop offset="0.93" stop-color="#ff3051"/><stop offset="0.972" stop-color="#ff1d43"/><stop offset="0.986" stop-color="#ff113d"/><stop offset="0.993" stop-color="#ff003a"/><stop offset="1" stop-color="#ff0037"/></linearGradient><linearGradient id="g128"><stop offset="0" stop-color="#00c2ff"/><stop offset="0.221" stop-color="#00c1ff"/><stop offset="0.229" stop-color="#26c1ff"/><stop offset="0.236" stop-color="#3ec0ff"/><stop offset="0.25" stop-color="#59c0ff"/><stop offset="0.271" stop-color="#75c0ff"/><stop offset="0.3" stop-color="#91c0ff"/><stop offset="0.343" stop-color="#b4bfff"/><stop offset="0.457" stop-color="#ffbcfe"/><stop offset="0.529" stop-color="#ff9fd8"/><stop offset="0.621" stop-color="#ff81b3"/><stop offset="0.929" stop-color="#ff3158"/><stop offset="0.971" stop-color="#ff1d4a"/><stop offset="0.986" stop-color="#ff1145"/><stop offset="0.993" stop-color="#ff0043"/><stop offset="1" stop-color="#ff0040"/></linearGradient><linearGradient id="g129"><stop offset="0" stop-color="#00c1ff"/><stop offset="0.225" stop-color="#00beff"/><stop offset="0.232" stop-color="#2fbeff"/><stop offset="0.239" stop-color="#42beff"/><stop offset="0.254" stop-color="#5cbeff"/><stop offset="0.275" stop-color="#77beff"/><stop offset="0.304" stop-color="#92bdff"/><stop offset="0.348" stop-color="#b4bcff"/><stop offset="0.464" stop-color="#ffb9fe"/><stop offset="0.536" stop-color="#ff9cd8"/><stop offset="0.63" stop-color="#ff7fb4"/><stop offset="0.928" stop-color="#ff315e"/><stop offset="0.971" stop-color="#ff1d51"/><stop offset="0.986" stop-color="#ff104d"/><stop offset="0.993" stop-color="#ff004a"/><stop offset="1" stop-color="#ff0048"/></linearGradient><linearGradient id="g130"><stop offset="0" stop-color="#00bfff"/><stop offset="0.221" stop-color="#00bcff"/><stop offset="0.228" stop-color="#0ebcff"/><stop offset="0.235" stop-color="#35bcff"/><stop offset="0.243" stop-color="#47bcff"/><stop offset="0.257" stop-color="#5fbcff"/><stop offset="0.279" stop-color="#78bbff"/><stop offset="0.353" stop-color="#b5baff"/><stop offset="0.471" stop-color="#ffb7ff"/><stop offset="0.544" stop-color="#ff99d9"/><stop offset="0.64" stop-color="#ff7cb5"/><stop offset="0.926" stop-color="#ff3164"/><stop offset="0.971" stop-color="#ff1d58"/><stop offset="0.985" stop-color="#ff1053"/><stop offset="0.993" stop-color="#ff0051"/><stop offset="1" stop-color="#ff004f"/></linearGradient><linearGradient id="g131"><stop offset="0" stop-color="#00bdff"/><stop offset="0.226" stop-color="#00baff"/><stop offset="0.233" stop-color="#29baff"/><stop offset="0.241" stop-color="#3fb9ff"/><stop offset="0.256" stop-color="#59b9ff"/><stop offset="0.286" stop-color="#7cb9ff"/><stop offset="0.361" stop-color="#b7b7ff"/><stop offset="0.481" stop-color="#ffb2fd"/><stop offset="0.556" stop-color="#ff95d8"/><stop offset="0.647" stop-color="#ff7ab6"/><stop offset="0.925" stop-color="#ff316a"/><stop offset="0.97" stop-color="#ff1d5e"/><stop offset="0.985" stop-color="#ff0f5a"/><stop offset="0.992" stop-color="#ff0058"/><stop offset="1" stop-color="#ff0055"/></linearGradient><linearGradient id="g132"><stop offset="0" stop-color="#00bbff"/><stop offset="0.229" stop-color="#00b7ff"/><stop offset="0.237" stop-color="#31b7ff"/><stop offset="0.244" stop-color="#44b7ff"/><stop offset="0.26" stop-color="#5cb7ff"/><stop offset="0.282" stop-color="#76b6ff"/><stop offset="0.359" stop-color="#b2b4ff"/><stop offset="0.489" stop-color="#ffaffe"/><stop offset="0.565" stop-color="#ff93d9"/><stop offset="0.656" stop-color="#ff78b7"/><stop offset="0.924" stop-color="#ff326f"/><stop offset="0.969" stop-color="#ff1d63"/><stop offset="0.985" stop-color="#ff0f5f"/><stop offset="0.992" stop-color="#ff005e"/><stop offset="1" stop-color="#ff005c"/></linearGradient><linearGradient id="g133"><stop offset="0" stop-color="#00b9ff"/><stop offset="0.227" stop-color="#00b5ff"/><stop offset="0.234" stop-color="#24b5ff"/><stop offset="0.242" stop-color="#3cb5ff"/><stop offset="0.258" stop-color="#57b5ff"/><stop offset="0.289" stop-color="#7ab4ff"/><stop offset="0.367" stop-color="#b5b2ff"/><stop offset="0.492" stop-color="#feadff"/><stop offset="0.578" stop-color="#ff8fd8"/><stop offset="0.664" stop-color="#ff76b9"/><stop offset="0.922" stop-color="#ff3274"/><stop offset="0.969" stop-color="#ff1d69"/><stop offset="0.984" stop-color="#ff0e65"/><stop offset="0.992" stop-color="#ff0063"/><stop offset="1" stop-color="#ff0061"/></linearGradient><linearGradient id="g134"><stop offset="0" stop-color="#00b7ff"/><stop offset="0.23" stop-color="#00b3ff"/><stop offset="0.238" stop-color="#2db3ff"/><stop offset="0.246" stop-color="#41b3ff"/><stop offset="0.262" stop-color="#5ab2ff"/><stop offset="0.286" stop-color="#74b1ff"/><stop offset="0.365" stop-color="#b0afff"/><stop offset="0.5" stop-color="#fdaaff"/><stop offset="0.579" stop-color="#ff8edc"/><stop offset="0.667" stop-color="#ff75bc"/><stop offset="0.921" stop-color="#ff3279"/><stop offset="0.968" stop-color="#ff1d6e"/><stop offset="0.976" stop-color="#ff176c"/><stop offset="0.992" stop-color="#ff0069"/><stop offset="1" stop-color="#ff0067"/></linearGradient><linearGradient id="g135"><stop offset="0" stop-color="#00b5ff"/><stop offset="0.226" stop-color="#00b1ff"/><stop offset="0.234" stop-color="#0bb1ff"/><stop offset="0.242" stop-color="#34b0ff"/><stop offset="0.25" stop-color="#45b0ff"/><stop offset="0.266" stop-color="#5db0ff"/><stop offset="0.298" stop-color="#7dafff"/><stop offset="0.387" stop-color="#bbacff"/><stop offset="0.516" stop-color="#ffa5fd"/><stop offset="0.589" stop-color="#ff8bdc"/><stop offset="0.677" stop-color="#ff72bd"/><stop offset="0.919" stop-color="#ff327f"/><stop offset="0.968" stop-color="#ff1d74"/><stop offset="0.976" stop-color="#ff1672"/><stop offset="0.992" stop-color="#ff006e"/><stop offset="1" stop-color="#ff006c"/></linearGradient><linearGradient id="g136"><stop offset="0" stop-color="#00b4ff"/><stop offset="0.231" stop-color="#00aeff"/><stop offset="0.24" stop-color="#29aeff"/><stop offset="0.248" stop-color="#3eaeff"/><stop offset="0.264" stop-color="#58adff"/><stop offset="0.298" stop-color="#7aacff"/><stop offset="0.38" stop-color="#b3a9ff"/><stop offset="0.521" stop-color="#ffa3ff"/><stop offset="0.595" stop-color="#ff8ade"/><stop offset="0.678" stop-color="#ff72c2"/><stop offset="0.917" stop-color="#ff3384"/><stop offset="0.967" stop-color="#ff1d79"/><stop offset="0.975" stop-color="#ff1677"/><stop offset="0.992" stop-color="#ff0073"/><stop offset="1" stop-color="#ff0071"/></linearGradient><linearGradient id="g137"><stop offset="0" stop-color="#00b2ff"/><stop offset="0.235" stop-color="#00acff"/><stop offset="0.244" stop-color="#31acff"/><stop offset="0.252" stop-color="#43abff"/><stop offset="0.269" stop-color="#5babff"/><stop offset="0.294" stop-color="#74aaff"/><stop offset="0.378" stop-color="#afa7ff"/><stop offset="0.529" stop-color="#fe9fff"/><stop offset="0.605" stop-color="#ff87df"/><stop offset="0.689" stop-color="#ff6fc2"/><stop offset="0.916" stop-color="#ff3389"/><stop offset="0.966" stop-color="#ff1c7e"/><stop offset="0.992" stop-color="#ff0078"/><stop offset="1" stop-color="#ff0076"/></linearGradient><linearGradient id="g138"><stop offset="0" stop-color="#00b0ff"/><stop offset="0.233" stop-color="#00aaff"/><stop offset="0.241" stop-color="#25aaff"/><stop offset="0.25" stop-color="#3ca9ff"/><stop offset="0.267" stop-color="#56a9ff"/><stop offset="0.302" stop-color="#78a8ff"/><stop offset="0.345" stop-color="#97a6ff"/><stop offset="0.397" stop-color="#b6a4ff"/><stop offset="0.543" stop-color="#ff9bfe"/><stop offset="0.612" stop-color="#ff85e1"/><stop offset="0.698" stop-color="#ff6dc4"/><stop offset="0.914" stop-color="#ff348e"/><stop offset="0.957" stop-color="#ff2285"/><stop offset="0.974" stop-color="#ff1681"/><stop offset="0.983" stop-color="#ff087f"/><stop offset="0.991" stop-color="#ff007d"/><stop offset="1" stop-color="#ff007b"/></linearGradient><linearGradient id="g139"><stop offset="0" stop-color="#00aeff"/><stop offset="0.237" stop-color="#00a7ff"/><stop offset="0.246" stop-color="#2ea7ff"/><stop offset="0.254" stop-color="#40a7ff"/><stop offset="0.272" stop-color="#59a6ff"/><stop offset="0.307" stop-color="#7aa5ff"/><stop offset="0.404" stop-color="#b6a1ff"/><stop offset="0.553" stop-color="#ff98ff"/><stop offset="0.623" stop-color="#ff82e2"/><stop offset="0.702" stop-color="#ff6cc8"/><stop offset="0.912" stop-color="#ff3493"/><stop offset="0.956" stop-color="#ff228a"/><stop offset="0.974" stop-color="#ff1586"/><stop offset="0.982" stop-color="#ff0484"/><stop offset="1" stop-color="#ff0080"/></linearGradient><linearGradient id="g140"><stop offset="0" stop-color="#00acff"/><stop offset="0.234" stop-color="#00a5ff"/><stop offset="0.243" stop-color="#21a5ff"/><stop offset="0.252" stop-color="#39a5ff"/><stop offset="0.261" stop-color="#48a4ff"/><stop offset="0.279" stop-color="#5ea4ff"/><stop offset="0.306" stop-color="#76a3ff"/><stop offset="0.396" stop-color="#af9fff"/><stop offset="0.559" stop-color="#fd95ff"/><stop offset="0.712" stop-color="#ff69c9"/><stop offset="0.91" stop-color="#ff3498"/><stop offset="0.964" stop-color="#ff1c8d"/><stop offset="0.973" stop-color="#ff158b"/><stop offset="0.982" stop-color="#ff0089"/><stop offset="1" stop-color="#ff0085"/></linearGradient><linearGradient id="g141"><stop offset="0" stop-color="#00aaff"/><stop offset="0.239" stop-color="#00a3ff"/><stop offset="0.248" stop-color="#2ba3ff"/><stop offset="0.257" stop-color="#3fa2ff"/><stop offset="0.275" stop-color="#57a2ff"/><stop offset="0.312" stop-color="#78a0ff"/><stop offset="0.404" stop-color="#b09cff"/><stop offset="0.569" stop-color="#fd91ff"/><stop offset="0.725" stop-color="#ff66ca"/><stop offset="0.908" stop-color="#ff359d"/><stop offset="0.963" stop-color="#ff1c92"/><stop offset="0.972" stop-color="#ff1490"/><stop offset="0.982" stop-color="#ff008e"/><stop offset="1" stop-color="#ff008a"/></linearGradient><linearGradient id="g142"><stop offset="0" stop-color="#00a8ff"/><stop offset="0.234" stop-color="#00a1ff"/><stop offset="0.243" stop-color="#08a0ff"/><stop offset="0.252" stop-color="#32a0ff"/><stop offset="0.262" stop-color="#43a0ff"/><stop offset="0.28" stop-color="#5a9fff"/><stop offset="0.318" stop-color="#7a9dff"/><stop offset="0.421" stop-color="#b598ff"/><stop offset="0.589" stop-color="#ff8cfe"/><stop offset="0.729" stop-color="#ff65ce"/><stop offset="0.907" stop-color="#ff35a2"/><stop offset="0.963" stop-color="#ff1c97"/><stop offset="0.972" stop-color="#ff1495"/><stop offset="0.981" stop-color="#ff0093"/><stop offset="1" stop-color="#ff008f"/></linearGradient><linearGradient id="g143"><stop offset="0" stop-color="#00a6ff"/><stop offset="0.24" stop-color="#009eff"/><stop offset="0.25" stop-color="#289eff"/><stop offset="0.26" stop-color="#3d9eff"/><stop offset="0.279" stop-color="#569dff"/><stop offset="0.317" stop-color="#779bff"/><stop offset="0.423" stop-color="#b396ff"/><stop offset="0.596" stop-color="#fe89ff"/><stop offset="0.731" stop-color="#ff64d2"/><stop offset="0.904" stop-color="#ff36a7"/><stop offset="0.962" stop-color="#ff1c9c"/><stop offset="0.971" stop-color="#ff149a"/><stop offset="0.981" stop-color="#ff0098"/><stop offset="1" stop-color="#ff0094"/></linearGradient><linearGradient id="g144"><stop offset="0" stop-color="#00a4ff"/><stop offset="0.245" stop-color="#009cff"/><stop offset="0.255" stop-color="#319bff"/><stop offset="0.265" stop-color="#429bff"/><stop offset="0.284" stop-color="#599aff"/><stop offset="0.324" stop-color="#7898ff"/><stop offset="0.431" stop-color="#b393ff"/><stop offset="0.608" stop-color="#fe86ff"/><stop offset="0.745" stop-color="#ff61d3"/><stop offset="0.902" stop-color="#ff36ad"/><stop offset="0.961" stop-color="#ff1ca1"/><stop offset="0.971" stop-color="#ff139f"/><stop offset="0.98" stop-color="#ff009d"/><stop offset="1" stop-color="#ff0099"/></linearGradient><linearGradient id="g145"><stop offset="0" stop-color="#00a2ff"/><stop offset="0.242" stop-color="#009aff"/><stop offset="0.253" stop-color="#2699ff"/><stop offset="0.263" stop-color="#3b99ff"/><stop offset="0.283" stop-color="#5598ff"/><stop offset="0.323" stop-color="#7596ff"/><stop offset="0.434" stop-color="#b190ff"/><stop offset="0.626" stop-color="#ff81fe"/><stop offset="0.747" stop-color="#ff60d7"/><stop offset="0.909" stop-color="#ff33b0"/><stop offset="0.96" stop-color="#ff1ca6"/><stop offset="0.97" stop-color="#ff12a4"/><stop offset="0.98" stop-color="#ff00a2"/><stop offset="1" stop-color="#ff009e"/></linearGradient><linearGradient id="g146"><stop offset="0" stop-color="#00a0ff"/><stop offset="0.247" stop-color="#0097ff"/><stop offset="0.258" stop-color="#2f97ff"/><stop offset="0.268" stop-color="#4096ff"/><stop offset="0.289" stop-color="#5895ff"/><stop offset="0.33" stop-color="#7793ff"/><stop offset="0.443" stop-color="#b28dff"/><stop offset="0.639" stop-color="#ff7dff"/><stop offset="0.763" stop-color="#ff5cd8"/><stop offset="0.907" stop-color="#ff34b5"/><stop offset="0.959" stop-color="#ff1bab"/><stop offset="0.969" stop-color="#ff12a9"/><stop offset="0.979" stop-color="#ff00a7"/><stop offset="1" stop-color="#ff00a3"/></linearGradient><linearGradient id="g147"><stop offset="0" stop-color="#009eff"/><stop offset="0.245" stop-color="#0095ff"/><stop offset="0.255" stop-color="#2595ff"/><stop offset="0.266" stop-color="#3a94ff"/><stop offset="0.287" stop-color="#5493ff"/><stop offset="0.33" stop-color="#7491ff"/><stop offset="0.447" stop-color="#b08aff"/><stop offset="0.649" stop-color="#fd79ff"/><stop offset="0.777" stop-color="#ff58d9"/><stop offset="0.904" stop-color="#ff34bb"/><stop offset="0.957" stop-color="#ff1bb0"/><stop offset="0.968" stop-color="#ff11ae"/><stop offset="0.979" stop-color="#ff00ac"/><stop offset="1" stop-color="#ff00a8"/></linearGradient><linearGradient id="g148"><stop offset="0" stop-color="#009cff"/><stop offset="0.25" stop-color="#0093ff"/><stop offset="0.261" stop-color="#2e92ff"/><stop offset="0.272" stop-color="#3f92ff"/><stop offset="0.293" stop-color="#5790ff"/><stop offset="0.337" stop-color="#768eff"/><stop offset="0.457" stop-color="#b087ff"/><stop offset="0.663" stop-color="#fd75ff"/><stop offset="0.902" stop-color="#ff34c1"/><stop offset="0.957" stop-color="#ff1bb5"/><stop offset="0.978" stop-color="#ff00b1"/><stop offset="1" stop-color="#ff00ad"/></linearGradient><linearGradient id="g149"><stop offset="0" stop-color="#009aff"/><stop offset="0.247" stop-color="#0090ff"/><stop offset="0.258" stop-color="#2390ff"/><stop offset="0.27" stop-color="#398fff"/><stop offset="0.281" stop-color="#488fff"/><stop offset="0.315" stop-color="#658dff"/><stop offset="0.348" stop-color="#7a8bff"/><stop offset="0.472" stop-color="#b384ff"/><stop offset="0.685" stop-color="#ff70ff"/><stop offset="0.787" stop-color="#ff55e1"/><stop offset="0.899" stop-color="#ff35c6"/><stop offset="0.955" stop-color="#ff1bbb"/><stop offset="0.978" stop-color="#ff00b7"/><stop offset="1" stop-color="#ff00b2"/></linearGradient><linearGradient id="g150"><stop offset="0" stop-color="#0098ff"/><stop offset="0.253" stop-color="#008eff"/><stop offset="0.264" stop-color="#2d8dff"/><stop offset="0.276" stop-color="#3f8dff"/><stop offset="0.299" stop-color="#568bff"/><stop offset="0.345" stop-color="#7589ff"/><stop offset="0.471" stop-color="#af81ff"/><stop offset="0.701" stop-color="#fe6bff"/><stop offset="0.908" stop-color="#ff31ca"/><stop offset="0.954" stop-color="#ff1bc0"/><stop offset="0.977" stop-color="#ff00bc"/><stop offset="1" stop-color="#ff00b8"/></linearGradient><linearGradient id="g151"><stop offset="0" stop-color="#0095ff"/><stop offset="0.25" stop-color="#008cff"/><stop offset="0.262" stop-color="#238bff"/><stop offset="0.274" stop-color="#398aff"/><stop offset="0.286" stop-color="#478aff"/><stop offset="0.321" stop-color="#6488ff"/><stop offset="0.357" stop-color="#7986ff"/><stop offset="0.488" stop-color="#b27dff"/><stop offset="0.714" stop-color="#fd67ff"/><stop offset="0.905" stop-color="#ff32d0"/><stop offset="0.952" stop-color="#ff1bc6"/><stop offset="0.976" stop-color="#ff00c1"/><stop offset="1" stop-color="#ff00bd"/></linearGradient><linearGradient id="g152"><stop offset="0" stop-color="#0093ff"/><stop offset="0.256" stop-color="#0089ff"/><stop offset="0.268" stop-color="#2c88ff"/><stop offset="0.28" stop-color="#3e88ff"/><stop offset="0.305" stop-color="#5586ff"/><stop offset="0.354" stop-color="#7484ff"/><stop offset="0.488" stop-color="#ae7bff"/><stop offset="0.732" stop-color="#fc62ff"/><stop offset="0.902" stop-color="#ff32d6"/><stop offset="0.951" stop-color="#ff1acc"/><stop offset="0.976" stop-color="#ff00c7"/><stop offset="1" stop-color="#ff00c3"/></linearGradient><linearGradient id="g153"><stop offset="0" stop-color="#0091ff"/><stop offset="0.253" stop-color="#0087ff"/><stop offset="0.266" stop-color="#2286ff"/><stop offset="0.278" stop-color="#3885ff"/><stop offset="0.316" stop-color="#5b83ff"/><stop offset="0.392" stop-color="#847fff"/><stop offset="0.506" stop-color="#b077ff"/><stop offset="0.759" stop-color="#fe5bff"/><stop offset="0.899" stop-color="#ff33dd"/><stop offset="0.949" stop-color="#ff1ad2"/><stop offset="0.962" stop-color="#ff0acf"/><stop offset="0.975" stop-color="#ff00cd"/><stop offset="1" stop-color="#ff00c8"/></linearGradient><linearGradient id="g154"><stop offset="0" stop-color="#008fff"/><stop offset="0.26" stop-color="#0084ff"/><stop offset="0.273" stop-color="#2c83ff"/><stop offset="0.286" stop-color="#3e83ff"/><stop offset="0.312" stop-color="#5581ff"/><stop offset="0.39" stop-color="#807dff"/><stop offset="0.494" stop-color="#a876ff"/><stop offset="0.649" stop-color="#d967ff"/><stop offset="0.779" stop-color="#fe56ff"/><stop offset="0.909" stop-color="#ff2fe0"/><stop offset="0.948" stop-color="#ff1ad8"/><stop offset="0.961" stop-color="#ff05d6"/><stop offset="0.974" stop-color="#ff00d3"/><stop offset="1" stop-color="#ff00ce"/></linearGradient><linearGradient id="g155"><stop offset="0" stop-color="#008cff"/><stop offset="0.257" stop-color="#0082ff"/><stop offset="0.27" stop-color="#2281ff"/><stop offset="0.284" stop-color="#3880ff"/><stop offset="0.311" stop-color="#517fff"/><stop offset="0.378" stop-color="#787bff"/><stop offset="0.486" stop-color="#a274ff"/><stop offset="0.676" stop-color="#db62ff"/><stop offset="0.811" stop-color="#ff4dfe"/><stop offset="0.892" stop-color="#ff34ea"/><stop offset="0.932" stop-color="#ff23e1"/><stop offset="0.946" stop-color="#ff1adf"/><stop offset="0.959" stop-color="#ff00dc"/><stop offset="1" stop-color="#ff00d4"/></linearGradient><linearGradient id="g156"><stop offset="0" stop-color="#008aff"/><stop offset="0.264" stop-color="#007fff"/><stop offset="0.278" stop-color="#2c7eff"/><stop offset="0.306" stop-color="#4a7dff"/><stop offset="0.375" stop-color="#7379ff"/><stop offset="0.472" stop-color="#9972ff"/><stop offset="0.681" stop-color="#d75fff"/><stop offset="0.833" stop-color="#ff47ff"/><stop offset="0.931" stop-color="#ff23e8"/><stop offset="0.944" stop-color="#ff19e5"/><stop offset="0.958" stop-color="#ff00e2"/><stop offset="1" stop-color="#ff00da"/></linearGradient><linearGradient id="g157"><stop offset="0" stop-color="#0088ff"/><stop offset="0.261" stop-color="#007dff"/><stop offset="0.275" stop-color="#237cff"/><stop offset="0.29" stop-color="#387bff"/><stop offset="0.319" stop-color="#5179ff"/><stop offset="0.377" stop-color="#7176ff"/><stop offset="0.464" stop-color="#9370ff"/><stop offset="0.681" stop-color="#d25cff"/><stop offset="0.826" stop-color="#f746ff"/><stop offset="0.87" stop-color="#ff3bfd"/><stop offset="0.928" stop-color="#ff23ef"/><stop offset="0.942" stop-color="#ff19ec"/><stop offset="0.957" stop-color="#ff00e9"/><stop offset="1" stop-color="#ff00e1"/></linearGradient><linearGradient id="g158"><stop offset="0" stop-color="#0085ff"/><stop offset="0.269" stop-color="#007aff"/><stop offset="0.284" stop-color="#2d79ff"/><stop offset="0.313" stop-color="#4a77ff"/><stop offset="0.373" stop-color="#6c74ff"/><stop offset="0.448" stop-color="#896fff"/><stop offset="0.672" stop-color="#ca5bff"/><stop offset="0.821" stop-color="#ef44ff"/><stop offset="0.881" stop-color="#fd36ff"/><stop offset="0.925" stop-color="#ff23f7"/><stop offset="0.94" stop-color="#ff18f3"/><stop offset="0.955" stop-color="#ff00f0"/><stop offset="1" stop-color="#ff00e7"/></linearGradient><linearGradient id="g159"><stop offset="0" stop-color="#0083ff"/><stop offset="0.266" stop-color="#0077ff"/><stop offset="0.281" stop-color="#2476ff"/><stop offset="0.297" stop-color="#3976ff"/><stop offset="0.313" stop-color="#4675ff"/><stop offset="0.359" stop-color="#6272ff"/><stop offset="0.438" stop-color="#826dff"/><stop offset="0.594" stop-color="#b160ff"/><stop offset="0.812" stop-color="#e744ff"/><stop offset="0.875" stop-color="#f535ff"/><stop offset="0.922" stop-color="#ff23ff"/><stop offset="0.938" stop-color="#ff18fb"/><stop offset="0.953" stop-color="#ff00f8"/><stop offset="1" stop-color="#ff00ee"/></linearGradient><linearGradient id="g160"><stop offset="0" stop-color="#0080ff"/><stop offset="0.262" stop-color="#0075ff"/><stop offset="0.295" stop-color="#3373ff"/><stop offset="0.311" stop-color="#4272ff"/><stop offset="0.361" stop-color="#5f6fff"/><stop offset="0.443" stop-color="#806aff"/><stop offset="0.59" stop-color="#ac5eff"/><stop offset="0.803" stop-color="#de43ff"/><stop offset="0.869" stop-color="#ed35ff"/><stop offset="0.918" stop-color="#f723ff"/><stop offset="0.934" stop-color="#fb18ff"/><stop offset="0.951" stop-color="#fe00ff"/><stop offset="1" stop-color="#ff00f5"/></linearGradient><linearGradient id="g161"><stop offset="0" stop-color="#007eff"/><stop offset="0.271" stop-color="#0072ff"/><stop offset="0.288" stop-color="#2671ff"/><stop offset="0.305" stop-color="#3970ff"/><stop offset="0.322" stop-color="#466fff"/><stop offset="0.373" stop-color="#626cff"/><stop offset="0.424" stop-color="#7669ff"/><stop offset="0.576" stop-color="#a45dff"/><stop offset="0.797" stop-color="#d742ff"/><stop offset="0.898" stop-color="#ec29ff"/><stop offset="0.932" stop-color="#f316ff"/><stop offset="0.949" stop-color="#f700ff"/><stop offset="1" stop-color="#ff00fd"/></linearGradient><linearGradient id="g162"><stop offset="0" stop-color="#007bff"/><stop offset="0.268" stop-color="#006fff"/><stop offset="0.304" stop-color="#346dff"/><stop offset="0.321" stop-color="#436cff"/><stop offset="0.375" stop-color="#6069ff"/><stop offset="0.429" stop-color="#7466ff"/><stop offset="0.571" stop-color="#9e5bff"/><stop offset="0.804" stop-color="#d23eff"/><stop offset="0.875" stop-color="#e02eff"/><stop offset="0.911" stop-color="#e821ff"/><stop offset="0.929" stop-color="#eb15ff"/><stop offset="0.946" stop-color="#ef00ff"/><stop offset="1" stop-color="#f900ff"/></linearGradient><linearGradient id="g163"><stop offset="0" stop-color="#0078ff"/><stop offset="0.278" stop-color="#006cff"/><stop offset="0.296" stop-color="#286bff"/><stop offset="0.315" stop-color="#3a6aff"/><stop offset="0.352" stop-color="#5168ff"/><stop offset="0.426" stop-color="#7063ff"/><stop offset="0.574" stop-color="#9a58ff"/><stop offset="0.796" stop-color="#ca3dff"/><stop offset="0.87" stop-color="#d92dff"/><stop offset="0.907" stop-color="#e01fff"/><stop offset="0.926" stop-color="#e313ff"/><stop offset="0.944" stop-color="#e700ff"/><stop offset="1" stop-color="#f100ff"/></linearGradient><linearGradient id="g164"><stop offset="0" stop-color="#0076ff"/><stop offset="0.275" stop-color="#0069ff"/><stop offset="0.294" stop-color="#1f68ff"/><stop offset="0.314" stop-color="#3667ff"/><stop offset="0.333" stop-color="#4466ff"/><stop offset="0.373" stop-color="#5864ff"/><stop offset="0.431" stop-color="#6e60ff"/><stop offset="0.569" stop-color="#9456ff"/><stop offset="0.784" stop-color="#c23dff"/><stop offset="0.882" stop-color="#d427ff"/><stop offset="0.922" stop-color="#dc13ff"/><stop offset="0.941" stop-color="#df00ff"/><stop offset="1" stop-color="#ea00ff"/></linearGradient><linearGradient id="g165"><stop offset="0" stop-color="#0073ff"/><stop offset="0.286" stop-color="#0066ff"/><stop offset="0.306" stop-color="#2a65ff"/><stop offset="0.327" stop-color="#3c64ff"/><stop offset="0.367" stop-color="#5261ff"/><stop offset="0.449" stop-color="#705cff"/><stop offset="0.592" stop-color="#9551ff"/><stop offset="0.796" stop-color="#be38ff"/><stop offset="0.857" stop-color="#c92bff"/><stop offset="0.898" stop-color="#d01eff"/><stop offset="0.939" stop-color="#d800ff"/><stop offset="1" stop-color="#e200ff"/></linearGradient><linearGradient id="g166"><stop offset="0" stop-color="#0070ff"/><stop offset="0.283" stop-color="#0063ff"/><stop offset="0.304" stop-color="#2462ff"/><stop offset="0.326" stop-color="#3861ff"/><stop offset="0.37" stop-color="#4f5eff"/><stop offset="0.457" stop-color="#6e59ff"/><stop offset="0.587" stop-color="#8f4eff"/><stop offset="0.783" stop-color="#b638ff"/><stop offset="0.848" stop-color="#c12bff"/><stop offset="0.891" stop-color="#c81dff"/><stop offset="0.935" stop-color="#d000ff"/><stop offset="1" stop-color="#da00ff"/></linearGradient><linearGradient id="g167"><stop offset="0" stop-color="#006dff"/><stop offset="0.279" stop-color="#0060ff"/><stop offset="0.326" stop-color="#345eff"/><stop offset="0.372" stop-color="#4d5bff"/><stop offset="0.442" stop-color="#6657ff"/><stop offset="0.581" stop-color="#894cff"/><stop offset="0.767" stop-color="#ad37ff"/><stop offset="0.837" stop-color="#b92aff"/><stop offset="0.884" stop-color="#c01dff"/><stop offset="0.93" stop-color="#c800ff"/><stop offset="1" stop-color="#d300ff"/></linearGradient><linearGradient id="g168"><stop offset="0" stop-color="#0069ff"/><stop offset="0.293" stop-color="#005cff"/><stop offset="0.317" stop-color="#285bff"/><stop offset="0.341" stop-color="#3a5aff"/><stop offset="0.39" stop-color="#5157ff"/><stop offset="0.463" stop-color="#6852ff"/><stop offset="0.61" stop-color="#8a47ff"/><stop offset="0.78" stop-color="#a932ff"/><stop offset="0.878" stop-color="#b91bff"/><stop offset="0.927" stop-color="#c000ff"/><stop offset="1" stop-color="#cb00ff"/></linearGradient><linearGradient id="g169"><stop offset="0" stop-color="#0066ff"/><stop offset="0.289" stop-color="#0059ff"/><stop offset="0.316" stop-color="#2258ff"/><stop offset="0.342" stop-color="#3756ff"/><stop offset="0.395" stop-color="#4f53ff"/><stop offset="0.447" stop-color="#5f50ff"/><stop offset="0.579" stop-color="#7f46ff"/><stop offset="0.763" stop-color="#a032ff"/><stop offset="0.868" stop-color="#b01bff"/><stop offset="0.895" stop-color="#b40aff"/><stop offset="0.921" stop-color="#b800ff"/><stop offset="1" stop-color="#c300ff"/></linearGradient><linearGradient id="g170"><stop offset="0" stop-color="#0063ff"/><stop offset="0.286" stop-color="#0056ff"/><stop offset="0.343" stop-color="#3353ff"/><stop offset="0.4" stop-color="#4d50ff"/><stop offset="0.457" stop-color="#5e4cff"/><stop offset="0.571" stop-color="#7844ff"/><stop offset="0.743" stop-color="#9632ff"/><stop offset="0.857" stop-color="#a81aff"/><stop offset="0.886" stop-color="#ac09ff"/><stop offset="0.914" stop-color="#b000ff"/><stop offset="1" stop-color="#bb00ff"/></linearGradient><linearGradient id="g171"><stop offset="0" stop-color="#005fff"/><stop offset="0.281" stop-color="#0053ff"/><stop offset="0.313" stop-color="#1151ff"/><stop offset="0.344" stop-color="#304fff"/><stop offset="0.406" stop-color="#4b4cff"/><stop offset="0.469" stop-color="#5d48ff"/><stop offset="0.594" stop-color="#773eff"/><stop offset="0.781" stop-color="#9628ff"/><stop offset="0.844" stop-color="#9f1aff"/><stop offset="0.875" stop-color="#a308ff"/><stop offset="0.906" stop-color="#a700ff"/><stop offset="1" stop-color="#b300ff"/></linearGradient><linearGradient id="g172"><stop offset="0" stop-color="#005bff"/><stop offset="0.3" stop-color="#004eff"/><stop offset="0.333" stop-color="#254cff"/><stop offset="0.367" stop-color="#384aff"/><stop offset="0.467" stop-color="#5844ff"/><stop offset="0.6" stop-color="#733aff"/><stop offset="0.767" stop-color="#8d27ff"/><stop offset="0.833" stop-color="#9618ff"/><stop offset="0.867" stop-color="#9b00ff"/><stop offset="1" stop-color="#ab00ff"/></linearGradient><linearGradient id="g173"><stop offset="0" stop-color="#0057ff"/><stop offset="0.296" stop-color="#004aff"/><stop offset="0.333" stop-color="#2148ff"/><stop offset="0.37" stop-color="#3646ff"/><stop offset="0.481" stop-color="#573fff"/><stop offset="0.667" stop-color="#7830ff"/><stop offset="0.778" stop-color="#8820ff"/><stop offset="0.815" stop-color="#8d18ff"/><stop offset="0.852" stop-color="#9200ff"/><stop offset="1" stop-color="#a300ff"/></linearGradient><linearGradient id="g174"><stop offset="0" stop-color="#0052ff"/><stop offset="0.292" stop-color="#0046ff"/><stop offset="0.333" stop-color="#1e44ff"/><stop offset="0.375" stop-color="#3441ff"/><stop offset="0.458" stop-color="#4d3cff"/><stop offset="0.583" stop-color="#6533ff"/><stop offset="0.75" stop-color="#7e20ff"/><stop offset="0.792" stop-color="#8318ff"/><stop offset="0.833" stop-color="#8800ff"/><stop offset="1" stop-color="#9a00ff"/></linearGradient><linearGradient id="g175"><stop offset="0" stop-color="#004dff"/><stop offset="0.286" stop-color="#0041ff"/><stop offset="0.381" stop-color="#343cff"/><stop offset="0.476" stop-color="#4d36ff"/><stop offset="0.714" stop-color="#7220ff"/><stop offset="0.762" stop-color="#7817ff"/><stop offset="0.81" stop-color="#7d00ff"/><stop offset="1" stop-color="#9100ff"/></linearGradient><linearGradient id="g176"><stop offset="0" stop-color="#0047ff"/><stop offset="0.278" stop-color="#003cff"/><stop offset="0.389" stop-color="#3436ff"/><stop offset="0.5" stop-color="#4d2fff"/><stop offset="0.722" stop-color="#6c17ff"/><stop offset="0.778" stop-color="#7200ff"/><stop offset="1" stop-color="#8800ff"/></linearGradient><linearGradient id="g177"><stop offset="0" stop-color="#0040ff"/><stop offset="0.267" stop-color="#0036ff"/><stop offset="0.333" stop-color="#1e32ff"/><stop offset="0.4" stop-color="#352fff"/><stop offset="0.467" stop-color="#432bff"/><stop offset="0.667" stop-color="#5f17ff"/><stop offset="0.733" stop-color="#6600ff"/><stop offset="1" stop-color="#7e00ff"/></linearGradient><linearGradient id="g178"><stop offset="0" stop-color="#0038ff"/><stop offset="0.25" stop-color="#002eff"/><stop offset="0.333" stop-color="#222aff"/><stop offset="0.417" stop-color="#3725ff"/><stop offset="0.5" stop-color="#441fff"/><stop offset="0.583" stop-color="#4f16ff"/><stop offset="0.667" stop-color="#5800ff"/><stop offset="1" stop-color="#7300ff"/></linearGradient><linearGradient id="g179"><stop offset="0" stop-color="#002eff"/><stop offset="0.25" stop-color="#0023ff"/><stop offset="0.375" stop-color="#2e1cff"/><stop offset="0.5" stop-color="#400dff"/><stop offset="0.625" stop-color="#4c00ff"/><stop offset="1" stop-color="#6800ff"/></linearGradient><linearGradient id="g180"><stop offset="0" stop-color="#001eff"/><stop offset="0.2" stop-color="#0012ff"/><stop offset="0.4" stop-color="#3200ff"/><stop offset="0.6" stop-color="#4300ff"/><stop offset="1" stop-color="#5a00ff"/></linearGradient><linearGradient id="g181"><stop offset="0" stop-color="#0000ff"/><stop offset="0.5" stop-color="#3600ff"/><stop offset="1" stop-color="#4900ff"/></linearGradient><clipPath id="loc"><polygon points="150.5,564.1 150.5,564.1 150.5,564.1 150.5,564.1 150.5,564.1 150.4,564.1 150.4,564.1 150.4,564.1 150.4,564.1 150.4,564.1 150.4,564.1 150.3,564.1 150.3,564.1 150.3,564.1 150.3,564.1 150.2,564.1 150.2,564.1 150.2,564.1 150.2,564.1 150.2,564.1 150.1,564.2 150.1,564.2 150.1,564.2 150.1,564.2 150.0,564.2 150.0,564.2 150.0,564.2 149.9,564.2 149.9,564.2 149.9,564.1 149.8,564.2 149.8,564.2 149.7,564.2 149.7,564.1 149.6,564.1 149.6,564.1 149.6,564.1 149.5,564.1 149.5,564.1 149.4,564.1 149.3,564.0 149.2,564.0 149.1,563.9 149.0,563.9 148.9,563.8 148.8,563.7 148.7,563.6 148.6,563.5 148.5,563.5 148.3,563.3 148.2,563.2 148.0,563.1 147.9,563.0 147.7,562.8 147.5,562.7 147.3,562.5 147.1,562.3 146.9,562.1 146.7,561.9 146.5,561.7 146.2,561.5 146.0,561.3 145.7,561.0 145.4,560.8 145.1,560.5 144.8,560.2 144.5,559.9 144.1,559.6 143.7,559.2 143.3,558.9 142.9,558.5 142.4,558.1 141.9,557.7 141.4,557.3 140.9,556.8 140.4,556.3 139.8,555.8 139.2,555.2 138.6,554.6 138.0,553.9 137.3,553.3 136.6,552.5 135.9,551.7 135.2,550.8 134.4,549.9 133.6,548.8 132.7,547.6 131.8,546.2 130.8,544.6 129.8,542.9 128.6,541.0 127.5,538.9 126.3,536.6 125.0,534.1 123.7,531.3 122.3,528.3 120.8,524.9 119.3,521.2 117.7,517.2 116.0,512.9 114.3,508.2 112.5,503.1 110.5,497.6 108.5,491.7 106.5,485.3 104.4,478.4 102.4,471.1 100.3,463.3 98.3,455.1 96.3,446.4 94.2,437.2 92.2,427.6 90.2,417.5 88.3,407.2 86.4,396.5 84.7,385.7 83.0,374.7 81.5,363.7 80.2,352.7 79.0,341.6 78.0,330.7 77.1,319.9 76.5,309.4 76.1,299.2 76.0,289.3 76.1,279.8 76.4,270.5 77.0,261.7 77.9,253.3 79.0,245.4 80.5,238.0 82.2,231.3 84.1,225.2 86.3,219.7 88.7,215.0 91.4,211.0 94.2,207.8 97.2,205.2 100.3,203.4 103.6,202.1 106.9,201.5 110.3,201.3 113.7,201.7 117.2,202.4 120.7,203.5 124.3,204.8 127.9,206.3 131.4,208.0 135.0,209.8 138.5,211.7 142.0,213.7 145.4,215.7 148.8,217.8 152.1,219.9 155.4,222.1 158.7,224.3 161.9,226.6 165.2,228.9 168.4,231.3 171.6,233.7 174.7,236.2 177.9,238.8 181.1,241.4 184.2,244.0 187.4,246.7 190.5,249.4 193.7,252.1 196.8,254.9 199.9,257.7 203.1,260.5 206.2,263.4 209.3,266.3 212.5,269.2 215.6,272.1 218.7,275.0 221.8,278.0 225.0,281.0 228.1,284.0 231.2,287.0 234.3,290.0 237.4,293.1 240.6,296.1 243.7,299.1 246.8,302.2 249.9,305.2 253.0,308.3 256.1,311.4 259.2,314.4 262.3,317.5 265.4,320.5 268.5,323.6 271.5,326.6 274.6,329.6 277.6,332.7 280.6,335.7 283.6,338.7 286.6,341.6 289.6,344.6 292.5,347.5 295.5,350.5 298.4,353.4 301.2,356.2 304.1,359.1 306.9,361.9 309.7,364.7 312.5,367.4 315.2,370.2 317.9,372.8 320.5,375.5 323.2,378.1 325.7,380.6 328.3,383.2 330.8,385.7 333.2,388.1 335.6,390.5 337.9,392.8 340.1,395.0 342.3,397.2 344.4,399.3 346.4,401.3 348.4,403.3 350.4,405.2 352.3,407.1 354.1,409.0 355.9,410.8 357.7,412.5 359.3,414.2 360.9,415.7 362.5,417.3 363.9,418.7 365.3,420.1 366.7,421.5 368.0,422.8 369.3,424.0 370.4,425.2 371.6,426.4 372.7,427.5 373.7,428.5 374.7,429.5 375.7,430.4 376.6,431.4 377.5,432.2 378.3,433.0 379.1,433.8 379.8,434.6 380.6,435.3 381.3,436.0 381.9,436.7 382.6,437.3 383.2,437.9 383.8,438.5 384.3,439.1 384.9,439.6 385.4,440.1 385.9,440.7 386.4,441.2 386.9,441.6 387.4,442.1 387.8,442.5 388.2,442.9 388.6,443.3 389.0,443.7 389.4,444.1 389.7,444.4 390.1,444.8 390.4,445.1 390.7,445.4 390.9,445.6 391.2,445.9 391.4,446.1 391.7,446.4 391.9,446.6 392.1,446.8 392.3,447.0 392.5,447.2 392.7,447.4 392.8,447.5 393.0,447.7 393.1,447.8 393.3,448.0 393.4,448.1 393.5,448.2 393.6,448.3 393.7,448.4 393.8,448.5 393.9,448.6 394.0,448.7 394.1,448.8 394.1,448.8 394.2,448.9 394.3,449.0 394.3,449.1 394.4,449.1 394.5,449.2 394.5,449.3 394.6,449.3 394.7,449.4 394.7,449.4 394.8,449.5 394.8,449.6 394.9,449.6 395.0,449.7 395.0,449.7 395.1,449.8 395.1,449.8 395.2,449.9 395.2,449.9 395.3,450.0 395.3,450.0 395.3,450.0 395.3,450.0 395.3,450.1 395.4,450.1 395.4,450.1 395.4,450.1 395.4,450.1 395.4,450.1 395.4,450.2 395.5,450.2 395.5,450.2 395.5,450.2"/></clipPath>
<clipPath id="box"><rect x="74.4" y="172.5" width="385.8" height="393.8"/></clipPath></defs>
<g clip-path="url(#box)"><g clip-path="url(#loc)"><rect x="100.3" y="201" width="19.8" height="2.5" fill="url(#g0)"/><rect x="96.6" y="203" width="29.2" height="2.5" fill="url(#g1)"/><rect x="94.1" y="205" width="36.2" height="2.5" fill="url(#g2)"/><rect x="92.1" y="207" width="42.3" height="2.5" fill="url(#g3)"/><rect x="90.4" y="209" width="47.8" height="2.5" fill="url(#g4)"/><rect x="89.1" y="211" width="52.7" height="2.5" fill="url(#g5)"/><rect x="87.7" y="213" width="57.5" height="2.5" fill="url(#g6)"/><rect x="86.7" y="215" width="61.8" height="2.5" fill="url(#g7)"/><rect x="85.7" y="217" width="66.0" height="2.5" fill="url(#g8)"/><rect x="84.8" y="219" width="70.0" height="2.5" fill="url(#g9)"/><rect x="84.0" y="221" width="73.8" height="2.5" fill="url(#g10)"/><rect x="83.2" y="223" width="77.5" height="2.5" fill="url(#g11)"/><rect x="82.5" y="225" width="81.0" height="2.5" fill="url(#g12)"/><rect x="81.9" y="227" width="84.4" height="2.5" fill="url(#g13)"/><rect x="81.3" y="229" width="87.7" height="2.5" fill="url(#g14)"/><rect x="80.7" y="231" width="90.8" height="2.5" fill="url(#g15)"/><rect x="80.2" y="233" width="93.9" height="2.5" fill="url(#g16)"/><rect x="79.7" y="235" width="97.0" height="2.5" fill="url(#g17)"/><rect x="79.3" y="237" width="99.9" height="2.5" fill="url(#g18)"/><rect x="78.9" y="239" width="102.7" height="2.5" fill="url(#g19)"/><rect x="78.5" y="241" width="105.6" height="2.5" fill="url(#g20)"/><rect x="78.1" y="243" width="108.3" height="2.5" fill="url(#g21)"/><rect x="77.8" y="245" width="111.0" height="2.5" fill="url(#g22)"/><rect x="77.5" y="247" width="113.6" height="2.5" fill="url(#g23)"/><rect x="77.2" y="249" width="116.2" height="2.5" fill="url(#g24)"/><rect x="76.9" y="251" width="118.8" height="2.5" fill="url(#g25)"/><rect x="76.7" y="253" width="121.2" height="2.5" fill="url(#g26)"/><rect x="76.5" y="255" width="123.7" height="2.5" fill="url(#g27)"/><rect x="76.3" y="257" width="126.1" height="2.5" fill="url(#g28)"/><rect x="76.1" y="259" width="128.5" height="2.5" fill="url(#g29)"/><rect x="75.9" y="261" width="130.9" height="2.5" fill="url(#g30)"/><rect x="75.8" y="263" width="133.2" height="2.5" fill="url(#g31)"/><rect x="75.7" y="265" width="135.5" height="2.5" fill="url(#g32)"/><rect x="75.5" y="267" width="137.7" height="2.5" fill="url(#g33)"/><rect x="75.4" y="269" width="140.0" height="2.5" fill="url(#g34)"/><rect x="75.3" y="271" width="142.2" height="2.5" fill="url(#g35)"/><rect x="75.3" y="273" width="144.4" height="2.5" fill="url(#g36)"/><rect x="75.2" y="275" width="146.6" height="2.5" fill="url(#g37)"/><rect x="75.1" y="277" width="148.7" height="2.5" fill="url(#g38)"/><rect x="75.1" y="279" width="150.9" height="2.5" fill="url(#g39)"/><rect x="75.1" y="281" width="153.0" height="2.5" fill="url(#g40)"/><rect x="75.0" y="283" width="155.1" height="2.5" fill="url(#g41)"/><rect x="75.0" y="285" width="157.2" height="2.5" fill="url(#g42)"/><rect x="75.0" y="287" width="159.3" height="2.5" fill="url(#g43)"/><rect x="75.0" y="289" width="161.3" height="2.5" fill="url(#g44)"/><rect x="75.0" y="291" width="163.4" height="2.5" fill="url(#g45)"/><rect x="75.0" y="293" width="165.4" height="2.5" fill="url(#g46)"/><rect x="75.1" y="295" width="167.4" height="2.5" fill="url(#g47)"/><rect x="75.1" y="297" width="169.4" height="2.5" fill="url(#g48)"/><rect x="75.1" y="299" width="171.4" height="2.5" fill="url(#g49)"/><rect x="75.2" y="301" width="173.4" height="2.5" fill="url(#g50)"/><rect x="75.3" y="303" width="175.4" height="2.5" fill="url(#g51)"/><rect x="75.4" y="305" width="177.3" height="2.5" fill="url(#g52)"/><rect x="75.4" y="307" width="179.3" height="2.5" fill="url(#g53)"/><rect x="75.5" y="309" width="181.2" height="2.5" fill="url(#g54)"/><rect x="75.6" y="311" width="183.2" height="2.5" fill="url(#g55)"/><rect x="75.7" y="313" width="185.1" height="2.5" fill="url(#g56)"/><rect x="75.9" y="315" width="187.0" height="2.5" fill="url(#g57)"/><rect x="76.0" y="317" width="188.9" height="2.5" fill="url(#g58)"/><rect x="76.1" y="319" width="190.8" height="2.5" fill="url(#g59)"/><rect x="76.2" y="321" width="192.6" height="2.5" fill="url(#g60)"/><rect x="76.4" y="323" width="194.5" height="2.5" fill="url(#g61)"/><rect x="76.5" y="325" width="196.4" height="2.5" fill="url(#g62)"/><rect x="76.7" y="327" width="198.2" height="2.5" fill="url(#g63)"/><rect x="76.8" y="329" width="200.1" height="2.5" fill="url(#g64)"/><rect x="77.0" y="331" width="201.9" height="2.5" fill="url(#g65)"/><rect x="77.2" y="333" width="203.8" height="2.5" fill="url(#g66)"/><rect x="77.4" y="335" width="205.6" height="2.5" fill="url(#g67)"/><rect x="77.6" y="337" width="207.4" height="2.5" fill="url(#g68)"/><rect x="77.7" y="339" width="209.2" height="2.5" fill="url(#g69)"/><rect x="77.9" y="341" width="211.0" height="2.5" fill="url(#g70)"/><rect x="78.1" y="343" width="212.8" height="2.5" fill="url(#g71)"/><rect x="78.3" y="345" width="214.6" height="2.5" fill="url(#g72)"/><rect x="78.6" y="347" width="216.4" height="2.5" fill="url(#g73)"/><rect x="78.8" y="349" width="218.2" height="2.5" fill="url(#g74)"/><rect x="79.0" y="351" width="220.0" height="2.5" fill="url(#g75)"/><rect x="79.2" y="353" width="221.8" height="2.5" fill="url(#g76)"/><rect x="79.4" y="355" width="223.5" height="2.5" fill="url(#g77)"/><rect x="79.7" y="357" width="225.3" height="2.5" fill="url(#g78)"/><rect x="79.9" y="359" width="227.1" height="2.5" fill="url(#g79)"/><rect x="80.2" y="361" width="228.8" height="2.5" fill="url(#g80)"/><rect x="80.4" y="363" width="230.6" height="2.5" fill="url(#g81)"/><rect x="80.7" y="365" width="232.3" height="2.5" fill="url(#g82)"/><rect x="81.0" y="367" width="234.1" height="2.5" fill="url(#g83)"/><rect x="81.2" y="369" width="235.8" height="2.5" fill="url(#g84)"/><rect x="81.5" y="371" width="237.5" height="2.5" fill="url(#g85)"/><rect x="81.8" y="373" width="239.3" height="2.5" fill="url(#g86)"/><rect x="82.1" y="375" width="241.0" height="2.5" fill="url(#g87)"/><rect x="82.4" y="377" width="242.7" height="2.5" fill="url(#g88)"/><rect x="82.7" y="379" width="244.4" height="2.5" fill="url(#g89)"/><rect x="83.0" y="381" width="246.1" height="2.5" fill="url(#g90)"/><rect x="83.3" y="383" width="247.8" height="2.5" fill="url(#g91)"/><rect x="83.5" y="385" width="249.5" height="2.5" fill="url(#g92)"/><rect x="83.9" y="387" width="251.2" height="2.5" fill="url(#g93)"/><rect x="84.2" y="389" width="252.9" height="2.5" fill="url(#g94)"/><rect x="84.5" y="391" width="254.6" height="2.5" fill="url(#g95)"/><rect x="84.8" y="393" width="256.3" height="2.5" fill="url(#g96)"/><rect x="85.2" y="395" width="257.9" height="2.5" fill="url(#g97)"/><rect x="85.5" y="397" width="259.6" height="2.5" fill="url(#g98)"/><rect x="85.8" y="399" width="261.3" height="2.5" fill="url(#g99)"/><rect x="86.2" y="401" width="262.9" height="2.5" fill="url(#g100)"/><rect x="86.5" y="403" width="264.6" height="2.5" fill="url(#g101)"/><rect x="86.9" y="405" width="266.2" height="2.5" fill="url(#g102)"/><rect x="87.2" y="407" width="267.9" height="2.5" fill="url(#g103)"/><rect x="87.6" y="409" width="269.5" height="2.5" fill="url(#g104)"/><rect x="88.0" y="411" width="271.2" height="2.5" fill="url(#g105)"/><rect x="88.4" y="413" width="272.8" height="2.5" fill="url(#g106)"/><rect x="88.7" y="415" width="274.4" height="2.5" fill="url(#g107)"/><rect x="89.1" y="417" width="276.1" height="2.5" fill="url(#g108)"/><rect x="89.5" y="419" width="277.7" height="2.5" fill="url(#g109)"/><rect x="89.9" y="421" width="279.3" height="2.5" fill="url(#g110)"/><rect x="90.3" y="423" width="280.9" height="2.5" fill="url(#g111)"/><rect x="90.7" y="425" width="282.5" height="2.5" fill="url(#g112)"/><rect x="91.1" y="427" width="284.1" height="2.5" fill="url(#g113)"/><rect x="91.5" y="429" width="285.7" height="2.5" fill="url(#g114)"/><rect x="91.9" y="431" width="287.3" height="2.5" fill="url(#g115)"/><rect x="92.4" y="433" width="288.9" height="2.5" fill="url(#g116)"/><rect x="92.8" y="435" width="290.5" height="2.5" fill="url(#g117)"/><rect x="93.2" y="437" width="292.1" height="2.5" fill="url(#g118)"/><rect x="93.6" y="439" width="293.6" height="2.5" fill="url(#g119)"/><rect x="94.1" y="441" width="295.2" height="2.5" fill="url(#g120)"/><rect x="94.5" y="443" width="296.7" height="2.5" fill="url(#g121)"/><rect x="95.0" y="445" width="298.3" height="2.5" fill="url(#g122)"/><rect x="95.4" y="447" width="299.9" height="2.5" fill="url(#g123)"/><rect x="95.9" y="449" width="300.4" height="2.5" fill="url(#g124)"/><rect x="96.3" y="451" width="298.3" height="2.5" fill="url(#g125)"/><rect x="96.8" y="453" width="293.6" height="2.5" fill="url(#g126)"/><rect x="97.3" y="455" width="288.8" height="2.5" fill="url(#g127)"/><rect x="97.8" y="457" width="284.0" height="2.5" fill="url(#g128)"/><rect x="98.3" y="459" width="279.2" height="2.5" fill="url(#g129)"/><rect x="98.8" y="461" width="274.4" height="2.5" fill="url(#g130)"/><rect x="99.2" y="463" width="269.6" height="2.5" fill="url(#g131)"/><rect x="99.8" y="465" width="264.8" height="2.5" fill="url(#g132)"/><rect x="100.3" y="467" width="260.0" height="2.5" fill="url(#g133)"/><rect x="100.8" y="469" width="255.1" height="2.5" fill="url(#g134)"/><rect x="101.3" y="471" width="250.3" height="2.5" fill="url(#g135)"/><rect x="101.9" y="473" width="245.5" height="2.5" fill="url(#g136)"/><rect x="102.5" y="475" width="240.6" height="2.5" fill="url(#g137)"/><rect x="103.0" y="477" width="235.7" height="2.5" fill="url(#g138)"/><rect x="103.6" y="479" width="230.8" height="2.5" fill="url(#g139)"/><rect x="104.2" y="481" width="225.9" height="2.5" fill="url(#g140)"/><rect x="104.8" y="483" width="221.0" height="2.5" fill="url(#g141)"/><rect x="105.4" y="485" width="216.1" height="2.5" fill="url(#g142)"/><rect x="106.0" y="487" width="211.2" height="2.5" fill="url(#g143)"/><rect x="106.7" y="489" width="206.3" height="2.5" fill="url(#g144)"/><rect x="107.3" y="491" width="201.3" height="2.5" fill="url(#g145)"/><rect x="108.0" y="493" width="196.4" height="2.5" fill="url(#g146)"/><rect x="108.7" y="495" width="191.4" height="2.5" fill="url(#g147)"/><rect x="109.3" y="497" width="186.4" height="2.5" fill="url(#g148)"/><rect x="110.0" y="499" width="181.4" height="2.5" fill="url(#g149)"/><rect x="110.7" y="501" width="176.4" height="2.5" fill="url(#g150)"/><rect x="111.4" y="503" width="171.4" height="2.5" fill="url(#g151)"/><rect x="112.1" y="505" width="166.4" height="2.5" fill="url(#g152)"/><rect x="112.9" y="507" width="161.4" height="2.5" fill="url(#g153)"/><rect x="113.6" y="509" width="156.3" height="2.5" fill="url(#g154)"/><rect x="114.3" y="511" width="151.3" height="2.5" fill="url(#g155)"/><rect x="115.1" y="513" width="146.2" height="2.5" fill="url(#g156)"/><rect x="115.9" y="515" width="141.2" height="2.5" fill="url(#g157)"/><rect x="116.6" y="517" width="136.1" height="2.5" fill="url(#g158)"/><rect x="117.4" y="519" width="131.0" height="2.5" fill="url(#g159)"/><rect x="118.2" y="521" width="125.9" height="2.5" fill="url(#g160)"/><rect x="119.0" y="523" width="120.8" height="2.5" fill="url(#g161)"/><rect x="119.9" y="525" width="115.6" height="2.5" fill="url(#g162)"/><rect x="120.7" y="527" width="110.5" height="2.5" fill="url(#g163)"/><rect x="121.6" y="529" width="105.3" height="2.5" fill="url(#g164)"/><rect x="122.6" y="531" width="100.1" height="2.5" fill="url(#g165)"/><rect x="123.5" y="533" width="94.8" height="2.5" fill="url(#g166)"/><rect x="124.5" y="535" width="89.5" height="2.5" fill="url(#g167)"/><rect x="125.5" y="537" width="84.2" height="2.5" fill="url(#g168)"/><rect x="126.6" y="539" width="78.8" height="2.5" fill="url(#g169)"/><rect x="127.7" y="541" width="73.4" height="2.5" fill="url(#g170)"/><rect x="128.8" y="543" width="68.0" height="2.5" fill="url(#g171)"/><rect x="130.1" y="545" width="62.4" height="2.5" fill="url(#g172)"/><rect x="131.4" y="547" width="56.8" height="2.5" fill="url(#g173)"/><rect x="132.8" y="549" width="51.1" height="2.5" fill="url(#g174)"/><rect x="134.3" y="551" width="45.3" height="2.5" fill="url(#g175)"/><rect x="136.1" y="553" width="39.2" height="2.5" fill="url(#g176)"/><rect x="138.0" y="555" width="33.0" height="2.5" fill="url(#g177)"/><rect x="140.2" y="557" width="26.5" height="2.5" fill="url(#g178)"/><rect x="142.4" y="559" width="20.0" height="2.5" fill="url(#g179)"/><rect x="144.7" y="561" width="13.4" height="2.5" fill="url(#g180)"/><rect x="146.9" y="563" width="6.9" height="2.5" fill="url(#g181)"/></g></g>
<g stroke="#000" stroke-opacity="0.13" stroke-width="1"><line x1="117.8" y1="172.5" x2="117.8" y2="566.2"/><line x1="161.5" y1="172.5" x2="161.5" y2="566.2"/><line x1="205.2" y1="172.5" x2="205.2" y2="566.2"/><line x1="248.9" y1="172.5" x2="248.9" y2="566.2"/><line x1="292.6" y1="172.5" x2="292.6" y2="566.2"/><line x1="336.3" y1="172.5" x2="336.3" y2="566.2"/><line x1="380.0" y1="172.5" x2="380.0" y2="566.2"/><line x1="423.7" y1="172.5" x2="423.7" y2="566.2"/><line x1="74.4" y1="522.5" x2="460.2" y2="522.5"/><line x1="74.4" y1="478.8" x2="460.2" y2="478.8"/><line x1="74.4" y1="435.0" x2="460.2" y2="435.0"/><line x1="74.4" y1="391.2" x2="460.2" y2="391.2"/><line x1="74.4" y1="347.5" x2="460.2" y2="347.5"/><line x1="74.4" y1="303.8" x2="460.2" y2="303.8"/><line x1="74.4" y1="260.0" x2="460.2" y2="260.0"/><line x1="74.4" y1="216.2" x2="460.2" y2="216.2"/></g>
<line x1="74.4" y1="172.5" x2="74.4" y2="567" stroke="#6e6e6e" stroke-width="1.2"/>
<line x1="73.8" y1="566.6" x2="460.2" y2="566.6" stroke="#6e6e6e" stroke-width="1.4"/>
<polygon points="208.4,304.7 347.4,420.5 144.4,530" fill="none" stroke="#f5a623" stroke-width="1.1"/>
<polygon points="185.3,261.4 374.7,443 136,543.1" fill="none" stroke="#111" stroke-width="1.25"/>
<g font-family="'Liberation Sans',sans-serif" font-size="12.5" fill="#3c3c3c" stroke="#3c3c3c" stroke-width="0.25" clip-path="url(#box)">
<text x="78.3" y="185">y</text>
<text x="77.3" y="220">0.8</text>
<text x="77.3" y="307.5">0.6</text>
<text x="77.3" y="395">0.4</text>
<text x="77.3" y="482.5">0.2</text>
<text x="78" y="562.3">0</text>
<text x="153.3" y="562.3">0.2</text>
<text x="240.7" y="562.3">0.4</text>
<text x="328.1" y="562.3">0.6</text>
<text x="415.5" y="562.3">0.8</text>
<text x="456.5" y="562.3">x</text>
</g>
<g font-family="'Liberation Sans',sans-serif" font-size="20.3" font-weight="bold">
<text x="331" y="266.5" fill="#000">Monitor</text>
<text x="331.5" y="291.3" fill="#f5a020" letter-spacing="0.6">sRGB</text>
</g>


<defs><linearGradient id="bg" x1="0" y1="0" x2="0" y2="1">
<stop offset="0" stop-color="#e24c18"/>
<stop offset="0.2" stop-color="#ea8c18"/>
<stop offset="0.4" stop-color="#e8ec18"/>
<stop offset="0.6" stop-color="#a4cc10"/>
<stop offset="0.8" stop-color="#5ca410"/>
<stop offset="1" stop-color="#348c10"/>
</linearGradient></defs>
<rect x="496" y="173" width="393.5" height="393.5" fill="url(#bg)"/>
<g stroke="#000" stroke-opacity="0.12" stroke-width="1"><line x1="496" x2="889" y1="251.3" y2="251.3"/><line x1="496" x2="889" y1="330.0" y2="330.0"/><line x1="496" x2="889" y1="407.0" y2="407.0"/><line x1="496" x2="889" y1="485.8" y2="485.8"/></g>
<g stroke="#0c0c0c" stroke-width="1.4"><rect x="566.00" y="173.5" width="13.7" height="393.0" fill="#2d2d2d"/><rect x="584.45" y="173.5" width="13.7" height="393.0" fill="#404040"/><rect x="602.90" y="339.7" width="13.7" height="226.8" fill="#808080"/><rect x="621.35" y="450.8" width="13.7" height="115.7" fill="#c8c8c8"/><rect x="658.25" y="450.6" width="13.7" height="115.9" fill="#ff0000"/><rect x="676.70" y="395.5" width="13.7" height="171.0" fill="#00ff00"/><rect x="695.15" y="469.6" width="13.7" height="96.9" fill="#0000ff"/><rect x="713.60" y="478.7" width="13.7" height="87.8" fill="#00ffff"/><rect x="732.05" y="466.5" width="13.7" height="100.0" fill="#ff00ff"/><rect x="750.50" y="434.3" width="13.7" height="132.2" fill="#ffff00"/><rect x="768.95" y="319.9" width="13.7" height="246.6" fill="#b05858"/><rect x="787.40" y="383.5" width="13.7" height="183.0" fill="#58a858"/><rect x="805.85" y="292.6" width="13.7" height="273.9" fill="#5858b0"/><rect x="824.30" y="408.2" width="13.7" height="158.3" fill="#58a8b0"/><rect x="842.75" y="411.3" width="13.7" height="155.2" fill="#b058b0"/><rect x="861.20" y="426.3" width="13.7" height="140.2" fill="#a8a858"/></g>
<rect x="496" y="173" width="393.5" height="393.5" fill="none" stroke="#1a1a1a" stroke-width="1.3"/>
<g font-family="'DejaVu Sans',sans-serif" font-size="11" fill="#200800" fill-opacity="0.78" stroke="#200800" stroke-opacity="0.5" stroke-width="0.3"><text x="499.5" y="184.7">10 d E 94</text><text x="499.5" y="255.3">8 d E 94</text><text x="499.5" y="334.2">6 d E 94</text><text x="499.5" y="411.2">4 d E 94</text><text x="499.5" y="490.0">2 d E 94</text></g>

</svg>
<!-- buttons -->
<div class="btn" style="left:29px;border:3px solid #0078d7"></div>
<svg class="abs" style="left:0;top:700px" width="200" height="70" viewBox="0 700 200 70"><rect x="32.5" y="720.5" width="105.5" height="25" fill="none" stroke="#111" stroke-width="1" stroke-dasharray="1 1"/></svg>
<div class="btn" style="left:160px"></div>
<div class="btn" style="left:688.4px"></div>
<div class="btn" style="left:819.2px"></div>
<svg class="abs" style="left:0;top:0;filter:blur(0.35px)" width="960" height="770" viewBox="0 0 960 770"><text x="34.5" y="27.5" font-family="'Liberation Sans',sans-serif" font-size="18.5">blue eye pro</text><text x="12.3" y="61" font-family="'Liberation Sans',sans-serif" font-size="18" letter-spacing="-0.25">Tools</text><text x="75.2" y="61" font-family="'Liberation Sans',sans-serif" font-size="18" letter-spacing="-0.3">Device</text><text x="151" y="61" font-family="'Liberation Sans',sans-serif" font-size="18">Help</text><text x="148.5" y="160.9" font-family="'DejaVu Sans Condensed','DejaVu Sans',sans-serif" font-size="16">sRGB</text><text x="233" y="160.9" font-family="'DejaVu Sans Condensed','DejaVu Sans',sans-serif" font-size="16">Adobe RGB</text><text x="360" y="160.9" font-family="'DejaVu Sans Condensed','DejaVu Sans',sans-serif" font-size="16" letter-spacing="0.45">ISOcoated</text><text x="610" y="139.7" font-family="'Liberation Sans',sans-serif" font-size="37" font-weight="bold">Calibration Report</text><text x="170" y="600.4" font-family="'Liberation Sans',sans-serif" font-size="18.3">Target</text><text x="268" y="600.4" font-family="'Liberation Sans',sans-serif" font-size="18.3" letter-spacing="0.2">Current</text><text x="366" y="600.4" font-family="'Liberation Sans',sans-serif" font-size="18.3" letter-spacing="0.15">Deviation</text><text x="71" y="623.5" font-family="'Liberation Sans',sans-serif" font-size="18.3" letter-spacing="0.5">Gamma</text><text x="170" y="623.5" font-family="'Liberation Sans',sans-serif" font-size="18.3">2.2</text><text x="268.5" y="623.5" font-family="'Liberation Sans',sans-serif" font-size="18.3" fill="#f08030">1.9</text><text x="367.5" y="623.5" font-family="'Liberation Sans',sans-serif" font-size="18.3" fill="#f08030">14%</text><text x="71" y="646.9" font-family="'Liberation Sans',sans-serif" font-size="18.3">Kelvin</text><text x="170" y="646.9" font-family="'Liberation Sans',sans-serif" font-size="18.3">6500</text><text x="268.5" y="646.9" font-family="'Liberation Sans',sans-serif" font-size="18.3" fill="#f08030">4130</text><text x="367.5" y="646.9" font-family="'Liberation Sans',sans-serif" font-size="18.3" fill="#f08030">36%</text><text x="71" y="669.8" font-family="'Liberation Sans',sans-serif" font-size="18.3" letter-spacing="0.4">cd/m2</text><text x="170" y="669.8" font-family="'Liberation Sans',sans-serif" font-size="18.3">120</text><text x="268.5" y="669.8" font-family="'Liberation Sans',sans-serif" font-size="18.3" fill="#f08030">101</text><text x="367.5" y="669.8" font-family="'Liberation Sans',sans-serif" font-size="18.3" fill="#f08030">16%</text><text x="496" y="600.5" font-family="'Liberation Sans',sans-serif" font-size="18.3">Delta E Average</text><text x="669.5" y="600.5" font-family="'Liberation Sans',sans-serif" font-size="18.3" fill="#f08030">4.5</text><text x="496" y="623.5" font-family="'Liberation Sans',sans-serif" font-size="18.3" letter-spacing="0.15">Delta E Maximum</text><text x="667" y="623.5" font-family="'Liberation Sans',sans-serif" font-size="18.3" fill="#f08030">12.2</text><text x="45.3" y="739.3" font-family="'DejaVu Sans Condensed','DejaVu Sans',sans-serif" font-size="16">Main Menu</text><text x="176" y="739.3" font-family="'DejaVu Sans Condensed','DejaVu Sans',sans-serif" font-size="16">Calibration</text><text x="724" y="739.3" font-family="'DejaVu Sans Condensed','DejaVu Sans',sans-serif" font-size="16" letter-spacing="0.6">Save</text><text x="858.6" y="739.3" font-family="'DejaVu Sans Condensed','DejaVu Sans',sans-serif" font-size="16">Quit</text></svg>
</body></html>
